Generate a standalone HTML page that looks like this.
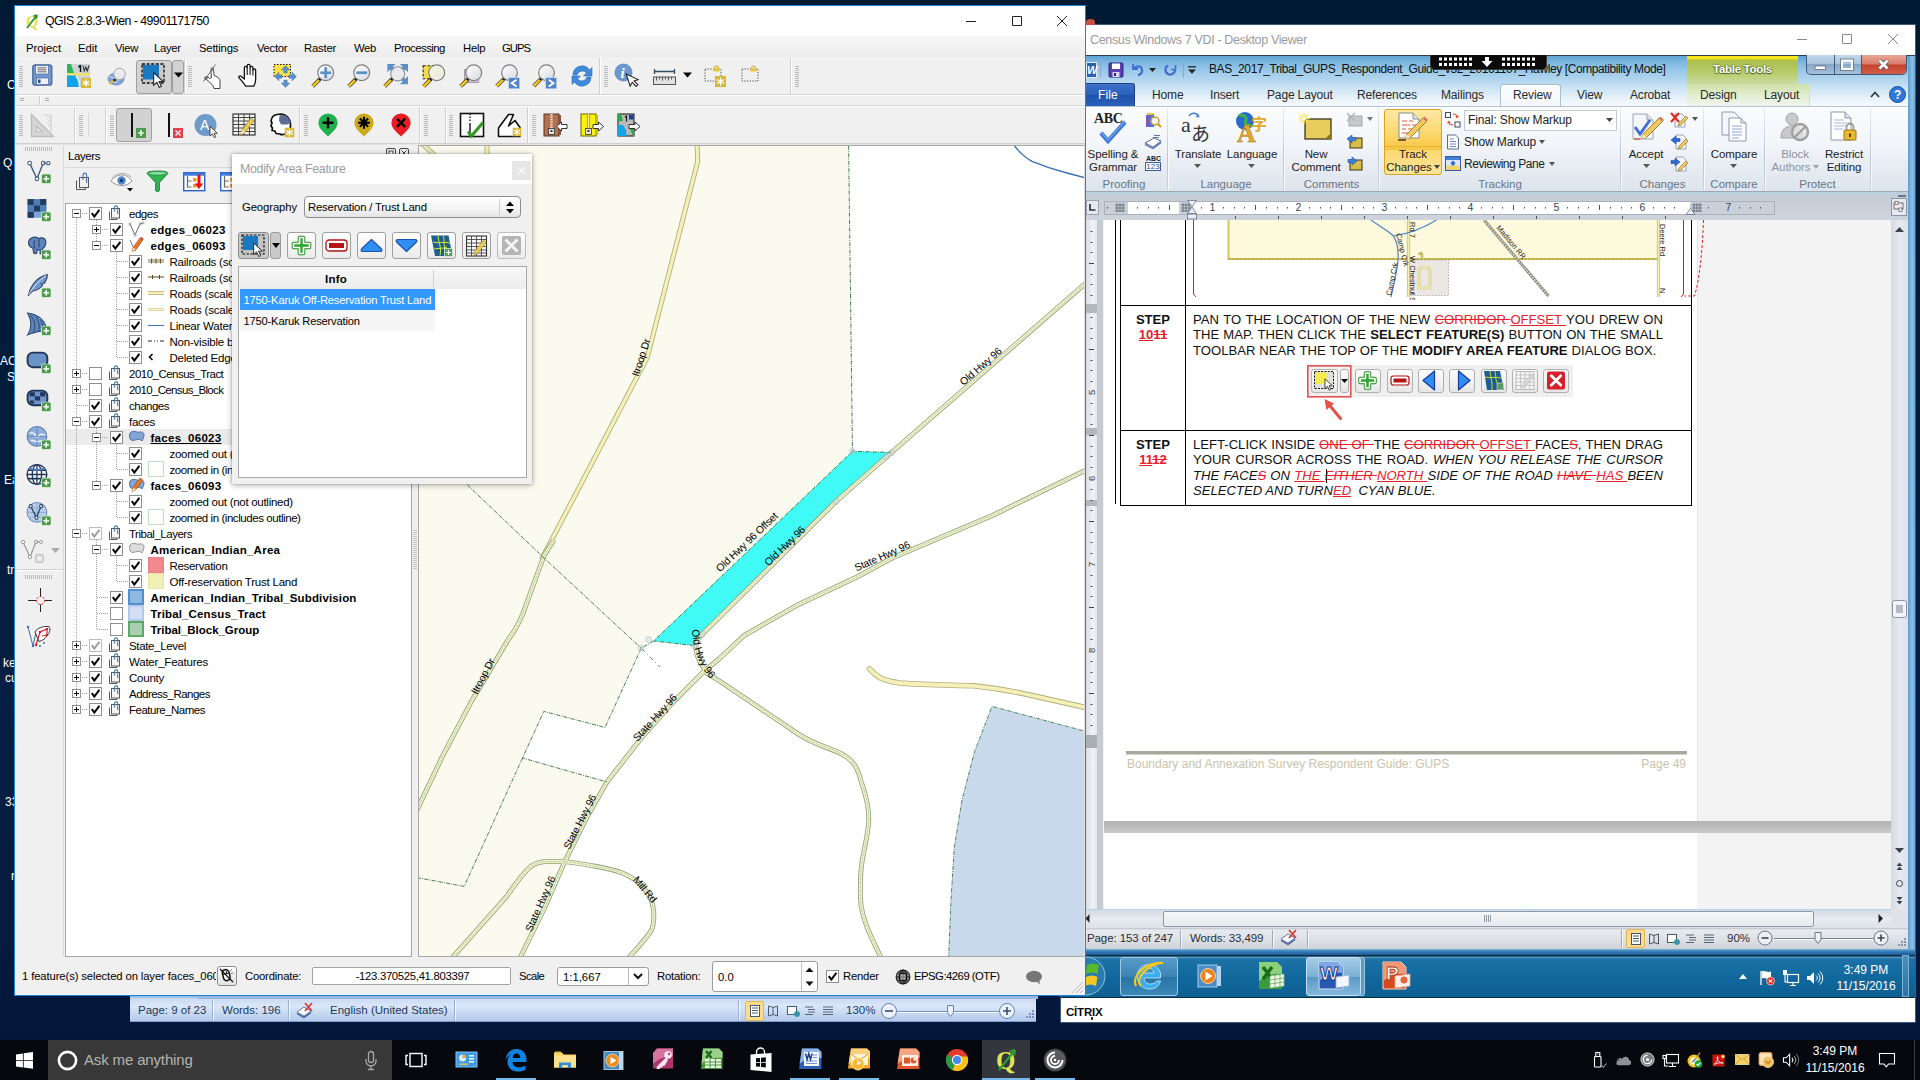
<!DOCTYPE html>
<html lang="en"><head><meta charset="utf-8"><title>Desktop</title>
<style>
*{box-sizing:border-box;margin:0;padding:0}
html,body{width:1920px;height:1080px;overflow:hidden;background:#001a33}
body{position:relative;font-family:"Liberation Sans",sans-serif;font-size:11px;color:#000}
.a{position:absolute}
.t{position:absolute;white-space:nowrap;line-height:1}
svg{position:absolute;overflow:visible}
/* qgis */
#qgis{position:absolute;left:14px;top:5px;width:1072px;height:991px;background:#f0f0f0;border:1px solid #1a84d8}
.q{font-family:"Liberation Sans",sans-serif;font-size:11.5px;color:#000}
.hdl{position:absolute;width:4px;background:repeating-linear-gradient(180deg,#b9b9b9 0,#b9b9b9 1px,transparent 1px,transparent 2px)}
.sep{position:absolute;width:1px;background:#d0d0d0;box-shadow:1px 0 0 #fff}
.cb{position:absolute;width:13px;height:13px;border:1px solid #8f8f8f;background:#fff}
.cb.g{border-color:#bcbcbc}
.row{position:absolute;height:16px;line-height:16px;white-space:nowrap;font-size:11.5px}
.b{font-weight:bold}
.ss{top:930px;width:1px;height:18px;background:#a4aab4;box-shadow:1px 0 0 #f4f6f8}
.dl{font-size:13.100px;line-height:15.500px;color:#111}
.j{width:470px;text-align:justify;text-align-last:justify;white-space:normal}
.de{color:#e8202c;text-decoration:line-through}
.in{color:#e8202c;text-decoration:underline}
.mb{top:369px;width:26px;height:24px;border:1px solid #b0b0b0;border-radius:3px;background:linear-gradient(180deg,#fdfdfd,#e6e6e6)}
.gs{top:108px;width:1px;height:82px;background:linear-gradient(180deg,#e8edf3,#b9c4d2 60%,#c9d2de);box-shadow:1px 0 0 #f8fafc}
.wt{top:89px;font-size:12px;color:#2a2a2a;letter-spacing:-.15px}
.wl{font-size:11.500px;color:#222;letter-spacing:-.1px;text-align:center}
.wg{top:179px;font-size:11.500px;color:#6a7486;letter-spacing:0;text-align:center}
.db{top:78px;width:29px;height:27px;border:1px solid #9f9f9f;border-radius:3px;background:linear-gradient(180deg,#fefefe,#ebebeb)}
</style></head><body>
<!-- desktop -->
<div class="a" id="desk" style="left:0;top:0;width:1920px;height:1040px;background:linear-gradient(180deg,#001a33 0,#011b38 300px,#061f44 700px,#051c40 900px,#03173a 1040px)"></div>
<div class="t" style="left:7px;top:79px;color:#fff;font-size:12px">C</div>
<div class="t" style="left:3px;top:157px;color:#fff;font-size:12px">Q</div>
<div class="t" style="left:0;top:355px;color:#fff;font-size:12px">AC</div>
<div class="t" style="left:7px;top:371px;color:#fff;font-size:12px">S</div>
<div class="t" style="left:4px;top:474px;color:#fff;font-size:12px">Ea</div>
<div class="t" style="left:7px;top:564px;color:#fff;font-size:12px">tr</div>
<div class="t" style="left:3px;top:657px;color:#fff;font-size:12px">ke</div>
<div class="t" style="left:5px;top:672px;color:#fff;font-size:12px">cu</div>
<div class="t" style="left:5px;top:796px;color:#fff;font-size:12px">33</div>
<div class="t" style="left:11px;top:870px;color:#fff;font-size:12px">r</div>
<!-- word window behind qgis (status bar visible) -->
<div class="a" style="left:130px;top:996px;width:906px;height:26px;background:linear-gradient(180deg,#8fb0dc 0,#c9dbf3 3px,#dbe7f8 10px,#c4d7f1 18px,#b5cbeb 25px);border-bottom:1px solid #7f9cc8"></div>
<div class="a" style="left:198px;top:996px;width:840px;height:3px;background:#9db7df"></div>
<div class="t" style="left:138px;top:1005px;font-size:11.5px;color:#1e395b">Page: 9 of 23</div>
<div class="a" style="left:212px;top:1000px;width:1px;height:21px;background:#9db4d6;box-shadow:1px 0 0 #eef4fc"></div>
<div class="t" style="left:222px;top:1005px;font-size:11.5px;color:#1e395b">Words: 196</div>
<div class="a" style="left:288px;top:1000px;width:1px;height:21px;background:#9db4d6;box-shadow:1px 0 0 #eef4fc"></div>
<svg style="left:296px;top:1002px" width="20" height="16" viewBox="0 0 20 16"><path d="M1 10 L8 5 L15 9 L8 14 Z" fill="#fff" stroke="#5a79b5" stroke-width="1"/><path d="M1 11.5 L8 15.5 L15 10.5" fill="none" stroke="#3c5a9a" stroke-width="1.4"/><path d="M9 1 L16 9 M16 1 L9 9" stroke="#e03c28" stroke-width="1.8"/></svg>
<div class="t" style="left:330px;top:1005px;font-size:11.5px;color:#1e395b">English (United States)</div>
<div class="a" style="left:454px;top:1000px;width:1px;height:21px;background:#9db4d6;box-shadow:1px 0 0 #eef4fc"></div>
<div class="a" style="left:738px;top:1000px;width:1px;height:21px;background:#9db4d6;box-shadow:1px 0 0 #eef4fc"></div>
<div class="a" style="left:745px;top:1001px;width:19px;height:20px;background:#fbdc8d;border:1px solid #e5b751;border-radius:2px"></div>
<svg style="left:745px;top:1001px" width="100" height="20" viewBox="0 0 100 20" fill="none" stroke="#4b5a72" stroke-width="1"><rect x="5.5" y="4.5" width="9" height="11" fill="#fff"/><path d="M7 7h6M7 9.5h6M7 12h6"/><path d="M23.500 5v10l4.500 -1.500l4.500 1.500v-10l-4.500 1.500zM28 6.500v7"/><rect x="42.500" y="5.500" width="9" height="8" fill="#fff"/><circle cx="52" cy="13" r="2.500" fill="#3b8bd4" stroke="#2a6"/><path d="M60 6h8M63 8.500h7M63 11h7M60 13.500h8M78 6h10M78 8.500h10M78 11h10M78 13.500h10" stroke="#5a6478"/></svg>
<div class="t" style="left:846px;top:1005px;font-size:11.5px;color:#1e395b">130%</div>
<svg style="left:880px;top:1002px" width="140" height="18" viewBox="0 0 140 18"><path d="M16 9.500h112" stroke="#7b93b8" stroke-width="1"/><path d="M16 10.500h112" stroke="#f4f8fd" stroke-width="1"/><circle cx="9" cy="9" r="7.500" fill="#e9f0fa" stroke="#6b82a8"/><path d="M5 9h8" stroke="#3c4f70" stroke-width="1.600"/><circle cx="127" cy="9" r="7.500" fill="#e9f0fa" stroke="#6b82a8"/><path d="M123 9h8M127 5v8" stroke="#3c4f70" stroke-width="1.600"/><path d="M67.500 3.500h6v7l-3 4l-3 -4z" fill="#e9f0fa" stroke="#6b82a8"/></svg>
<svg style="left:1024px;top:1008px" width="12" height="12" viewBox="0 0 12 12" fill="#7a92b8"><rect x="8" y="2" width="2" height="2"/><rect x="5" y="5" width="2" height="2"/><rect x="8" y="5" width="2" height="2"/><rect x="2" y="8" width="2" height="2"/><rect x="5" y="8" width="2" height="2"/><rect x="8" y="8" width="2" height="2"/></svg>
<!-- Citrix Desktop Viewer window -->
<div class="a" id="ctx" style="left:1060px;top:24px;width:856px;height:999px;background:#fff;border:1px solid #3c5a80"></div>
<div class="t" style="left:1090px;top:34px;font-size:12.500px;color:#9a9a9a;letter-spacing:-.35px">Census Windows 7 VDI - Desktop Viewer</div>
<svg style="left:1796px;top:33px" width="104" height="12" viewBox="0 0 104 12" fill="none" stroke="#8a8a8a" stroke-width="1"><path d="M1 6.500h10M46.500 1.500h9v9h-9zM92 1l10 10M102 1L92 11"/></svg>
<div class="t" style="left:1066px;top:1006.500px;font-size:11.500px;font-weight:bold;letter-spacing:-.2px;color:#0a0a0a">CİTRIX</div><div class="a" style="left:1090.500px;top:1017px;width:2.500px;height:2.500px;border-radius:50%;background:#0a0a0a"></div>
<div class="a" style="left:1086px;top:19px;width:9px;height:6px;border-radius:50% 50% 0 0;background:#c8503c"></div>
<!-- Word 2010 window -->
<div class="a" style="left:1061px;top:55px;width:854px;height:898px;background:#b4d4ec"></div>
<div class="a" style="left:1061px;top:55px;width:854px;height:1px;background:#2d3f58"></div>
<div class="a" style="left:1061px;top:56px;width:847px;height:28px;background:linear-gradient(180deg,#5fa4d4 0,#7ab6e0 20%,#9ccaea 55%,#bcdcf0 100%)"></div>
<div class="a" style="left:1908px;top:56px;width:7px;height:897px;background:linear-gradient(90deg,#5f9bd0,#8cc0e6 60%,#6aa6d8)"></div>
<!-- QAT -->
<div class="a" style="left:1086px;top:62px;width:11px;height:16px;background:#2b5fb4;border:1px solid #dfeaf8;color:#fff;font-weight:bold;font-size:11px;line-height:14px;text-align:center;font-style:italic">W</div>
<div class="a" style="left:1100px;top:63px;width:1px;height:15px;background:#8aa8cc"></div>
<svg style="left:1108px;top:62px" width="16" height="16" viewBox="0 0 16 16"><rect x="1" y="1" width="14" height="14" rx="1" fill="#5a3fb0" stroke="#2e2080"/><rect x="4" y="1.500" width="8" height="5.500" fill="#fff"/><rect x="4.500" y="10" width="7" height="5" fill="#d8d8f0"/><rect x="6" y="11" width="2" height="3" fill="#2e2080"/></svg>
<svg style="left:1130px;top:63px" width="16" height="14" viewBox="0 0 16 14" fill="none"><path d="M3 1v5h5" stroke="#3f6fd0" stroke-width="1.800"/><path d="M3.500 6C6 2.500 11 2.500 12 6.500c.6 3-1.500 5-4 6" stroke="#3f6fd0" stroke-width="2.200"/></svg>
<svg style="left:1149px;top:68px" width="7" height="4" viewBox="0 0 7 4"><path d="M0 0h7L3.500 4z" fill="#222"/></svg>
<svg style="left:1163px;top:62px" width="16" height="16" viewBox="0 0 16 16" fill="none"><path d="M12.500 3v4.500H8" stroke="#3f6fd0" stroke-width="1.600"/><path d="M12 8A4.800 4.800 0 1 1 5 3.500" stroke="#3f6fd0" stroke-width="2.300"/></svg>
<div class="a" style="left:1183px;top:63px;width:1px;height:15px;background:#8aa8cc"></div>
<svg style="left:1188px;top:66px" width="8" height="8" viewBox="0 0 8 8"><path d="M0 .8h8" stroke="#222" stroke-width="1.300"/><path d="M0 3.500h8L4 7.800z" fill="#222"/></svg>
<div class="t" style="left:1209px;top:63px;font-size:12px;letter-spacing:-.4px;color:#111">BAS_2017_Tribal_GUPS_Respondent_Guide_v32_20161107_Hawley [Compatibility Mode]</div>
<!-- citrix pill -->
<div class="a" style="left:1430px;top:55px;width:117px;height:15px;background:#0b0b0b;border-radius:0 0 5px 5px;border:1px solid #3a3a3a;border-top:none"></div>
<svg style="left:1438px;top:56px" width="100" height="12" viewBox="0 0 100 12" fill="#fff"><g id="dg"><rect x="1" y="1.500" width="3" height="3"/><rect x="6" y="1.500" width="3" height="3"/><rect x="11" y="1.500" width="3" height="3"/><rect x="16" y="1.500" width="3" height="3"/><rect x="21" y="1.500" width="3" height="3"/><rect x="26" y="1.500" width="3" height="3"/><rect x="31" y="1.500" width="3" height="3"/><rect x="1" y="7" width="3" height="3"/><rect x="6" y="7" width="3" height="3"/><rect x="11" y="7" width="3" height="3"/><rect x="16" y="7" width="3" height="3"/><rect x="21" y="7" width="3" height="3"/><rect x="26" y="7" width="3" height="3"/><rect x="31" y="7" width="3" height="3"/></g><use href="#dg" x="63"/><path d="M47 1h4v4h3.500L49 11 43.500 5H47z"/></svg>
<!-- table tools -->
<div class="a" style="left:1687px;top:56px;width:111px;height:28px;background:linear-gradient(180deg,#f6e614 0,#f2e21c 3px,#a9c04c 4px,#b8cc6c 60%,#c8dca0 100%)"></div>
<div class="t" style="left:1687px;top:64px;width:111px;text-align:center;font-size:11.500px;font-weight:bold;color:#fff;letter-spacing:-.3px;text-shadow:0 0 2px #4a6018,0 0 1px #4a6018,0 1px 1px #4a6018">Table Tools</div>
<!-- win7 caption buttons -->
<div class="a" style="left:1806px;top:55px;width:101px;height:20px;border:1px solid #40587a;border-top:none;border-radius:0 0 5px 5px;background:linear-gradient(180deg,#c4d8ea 0,#a9c4dc 45%,#86a8c8 50%,#a4c0da 100%);overflow:hidden"><div class="a" style="left:27px;top:0;width:1px;height:20px;background:#40587a"></div><div class="a" style="left:54px;top:0;width:1px;height:20px;background:#40587a"></div><div class="a" style="left:55px;top:0;width:46px;height:20px;background:linear-gradient(180deg,#e8a898 0,#d87c68 45%,#c4432c 50%,#d4604c 100%)"></div></div>
<svg style="left:1806px;top:55px" width="101" height="20" viewBox="0 0 101 20"><rect x="9" y="11" width="10.500" height="3.500" fill="#fff" stroke="#555" stroke-width=".7"/><rect x="36" y="5.500" width="10" height="8.500" fill="none" stroke="#fff" stroke-width="2.200"/><rect x="34.500" y="4" width="13" height="11.500" fill="none" stroke="#555" stroke-width=".6"/><path d="M73.500 5.500l8 8M81.500 5.500l-8 8" stroke="#555" stroke-width="4.200"/><path d="M73.500 5.500l8 8M81.500 5.500l-8 8" stroke="#fff" stroke-width="2.800"/></svg>
<!-- tabs row -->
<div class="a" style="left:1086px;top:84px;width:601px;height:22px;background:linear-gradient(180deg,#c0def2,#e4f0f9 60%,#f6fafd)"></div>
<div class="a" style="left:1798px;top:84px;width:110px;height:22px;background:linear-gradient(180deg,#c0def2,#e4f0f9 60%,#f6fafd)"></div>
<div class="a" style="left:1687px;top:84px;width:123px;height:22px;background:linear-gradient(180deg,#cfe0a4,#e4eed4 55%,#f0f5ec);border-right:1px solid #d8e4b0"></div>
<div class="a" style="left:1061px;top:83px;width:74px;height:23px;border-radius:3px 3px 0 0;background:linear-gradient(180deg,#3b73c8 0,#2a5eb8 50%,#1f52aa 51%,#2a62bc 100%);border:1px solid #1a428c;border-bottom:none"></div>
<div class="t" style="left:1098px;top:89px;font-size:12px;color:#fff;letter-spacing:.1px">File</div>
<div class="a" style="left:1500px;top:84px;width:61px;height:23px;background:linear-gradient(180deg,#fbfdff,#f3f6fa);border:1px solid #a9bcd0;border-bottom:none;border-radius:3px 3px 0 0"></div>
<div class="t wt" style="left:1152px">Home</div><div class="t wt" style="left:1210px">Insert</div><div class="t wt" style="left:1267px">Page Layout</div><div class="t wt" style="left:1357px">References</div><div class="t wt" style="left:1441px">Mailings</div><div class="t wt" style="left:1513px">Review</div><div class="t wt" style="left:1577px">View</div><div class="t wt" style="left:1630px">Acrobat</div><div class="t wt" style="left:1700px">Design</div><div class="t wt" style="left:1764px">Layout</div>
<svg style="left:1870px;top:91px" width="10" height="7" viewBox="0 0 10 7"><path d="M1 6l4-4.500L9 6" fill="none" stroke="#333" stroke-width="1.600"/></svg>
<svg style="left:1889px;top:86px" width="17" height="17" viewBox="0 0 17 17"><circle cx="8.500" cy="8.500" r="8" fill="#2f78d8" stroke="#1c52a8"/><text x="5" y="13" font-family="Liberation Sans,sans-serif" font-weight="bold" font-size="12" fill="#fff">?</text></svg>
<!-- ribbon -->
<div class="a" style="left:1086px;top:106px;width:822px;height:86px;background:linear-gradient(180deg,#fbfcfe 0,#f2f5f9 45%,#e6ebf2 75%,#dde4ed 100%);border-top:1px solid #b4c4d6;border-bottom:1px solid #9aa8b8"></div>
<div class="a gs" style="left:1167px"></div><div class="a gs" style="left:1283px"></div><div class="a gs" style="left:1378px"></div><div class="a gs" style="left:1620px"></div><div class="a gs" style="left:1703px"></div><div class="a gs" style="left:1764px"></div><div class="a gs" style="left:1870px"></div>
<div class="t wg" style="left:1086px;width:76px">Proofing</div><div class="t wg" style="left:1168px;width:116px">Language</div><div class="t wg" style="left:1284px;width:95px">Comments</div><div class="t wg" style="left:1379px;width:242px">Tracking</div><div class="t wg" style="left:1621px;width:83px">Changes</div><div class="t wg" style="left:1704px;width:60px">Compare</div><div class="t wg" style="left:1765px;width:105px">Protect</div>
<!-- spelling -->
<div class="t" style="left:1094px;top:112px;font-family:'Liberation Serif',serif;font-weight:bold;font-size:14px;color:#222;letter-spacing:-.3px">ABC</div>
<svg style="left:1098px;top:120px" width="30" height="24" viewBox="0 0 30 24"><path d="M3 13l7 8L27 2" fill="none" stroke="#3b78d8" stroke-width="4.200" stroke-linejoin="miter"/><path d="M3 12l7 8L27 1" fill="none" stroke="#6da4f0" stroke-width="1.200"/></svg>
<div class="t wl" style="left:1076px;top:149px;width:74px">Spelling &amp;</div><div class="t wl" style="left:1076px;top:162px;width:74px">Grammar</div>
<svg style="left:1144px;top:112px" width="18" height="18" viewBox="0 0 18 18"><rect x="2" y="3" width="4" height="12" fill="#7a5ac0"/><rect x="6" y="2" width="4" height="13" fill="#3f7fd8"/><rect x="3" y="1" width="6" height="2" fill="#e8c040"/><circle cx="11" cy="9" r="4" fill="#eef4fb" stroke="#d09a20" stroke-width="1.400"/><path d="M14 12l3 3" stroke="#d09a20" stroke-width="2"/></svg>
<svg style="left:1144px;top:134px" width="18" height="16" viewBox="0 0 18 16"><path d="M1 9l8 4 8-6-7-3z" fill="#fff" stroke="#4a68a8" stroke-width="1"/><path d="M1 10.500l8 4 8-6" fill="none" stroke="#4a68a8" stroke-width="1.200"/><path d="M10 1.500h6M9 3.500h6" stroke="#4a68a8" stroke-width=".9"/></svg>
<div class="t" style="left:1146px;top:155px;font-size:7px;font-weight:bold;color:#222">ABC</div>
<div class="a" style="left:1145px;top:162px;width:16px;height:9px;border:1px solid #3a5a9a;background:#fff;font-size:8px;line-height:7px;color:#2a4a9a;text-align:center">123</div>
<!-- translate -->
<div class="t" style="left:1181px;top:114px;font-family:'Liberation Serif',serif;font-size:22px;color:#333">a</div>
<div class="t" style="left:1191px;top:123px;font-family:'Noto Sans CJK JP','Liberation Sans',sans-serif;font-size:19px;color:#333">あ</div>
<svg style="left:1188px;top:111px" width="12" height="8" viewBox="0 0 12 8"><path d="M1 5c2-3 6-4 9-1" fill="none" stroke="#3f7fd8" stroke-width="1.400"/><path d="M11.500 6.500l-4-.5 3-3z" fill="#3f7fd8"/></svg>
<div class="t wl" style="left:1170px;top:149px;width:56px">Translate</div>
<svg style="left:1194px;top:164px" width="7" height="4" viewBox="0 0 7 4"><path d="M0 0h7L3.500 4z" fill="#555"/></svg>
<!-- language -->
<svg style="left:1234px;top:110px" width="36" height="34" viewBox="0 0 36 34"><circle cx="11" cy="11" r="9" fill="#2a6ad0"/><path d="M5 6c3-2 6 0 7 2s-2 4 0 6 5 0 6 3" fill="none" stroke="#3fb04a" stroke-width="3"/><text x="3" y="32" font-family="Liberation Serif,serif" font-weight="bold" font-size="26" fill="#e0a830" stroke="#b07c14" stroke-width=".5">A</text><text x="17" y="20" font-family="Noto Sans CJK SC,sans-serif" font-weight="bold" font-size="16" fill="#e0a830">字</text></svg>
<div class="t wl" style="left:1222px;top:149px;width:60px">Language</div>
<svg style="left:1248px;top:164px" width="7" height="4" viewBox="0 0 7 4"><path d="M0 0h7L3.500 4z" fill="#555"/></svg>
<!-- new comment -->
<svg style="left:1298px;top:112px" width="36" height="30" viewBox="0 0 36 30"><rect x="7" y="7" width="26" height="20" fill="#e8cc5c" stroke="#3a3420" stroke-width="1.300"/><path d="M27 27l6-6v6z" fill="#8a7420"/><path d="M6 1v11M.500 6.500h11M2 2.500l8 8M10 2.500l-8 8" stroke="#fbe45c" stroke-width="1.300"/><circle cx="6" cy="6.500" r="1.800" fill="#fff"/></svg>
<div class="t wl" style="left:1286px;top:149px;width:60px">New</div><div class="t wl" style="left:1286px;top:162px;width:60px">Comment</div>
<svg style="left:1346px;top:112px" width="28" height="16" viewBox="0 0 28 16"><rect x="3" y="4" width="13" height="10" fill="#c8c8c8" stroke="#a8a8a8"/><path d="M1 1l8 8M9 1L1 9" stroke="#b4b4b4" stroke-width="1.500"/><path d="M21 5h6l-3 4z" fill="#777"/></svg>
<svg style="left:1346px;top:134px" width="18" height="16" viewBox="0 0 18 16"><rect x="4" y="4" width="12" height="10" fill="#d8bc48" stroke="#3a3420"/><path d="M1 5l5-4v2.500h4v3H6V9z" fill="#3f7fd8" stroke="#1c52a8" stroke-width=".6"/></svg>
<svg style="left:1346px;top:156px" width="18" height="16" viewBox="0 0 18 16"><rect x="4" y="4" width="12" height="10" fill="#d8bc48" stroke="#3a3420"/><path d="M11 5L6 1v2.500H2v3h4V9z" fill="#3f7fd8" stroke="#1c52a8" stroke-width=".6"/></svg>
<!-- track changes (active) -->
<div class="a" style="left:1384px;top:109px;width:58px;height:66px;border:1px solid #d9a520;border-radius:3px;background:linear-gradient(180deg,#fde9a4 0,#fbd668 40%,#f9c440 62%,#fbd870 63%,#fde49a 100%)"></div>
<div class="a" style="left:1385px;top:146px;width:56px;height:1px;background:#e4b53c"></div>
<svg style="left:1396px;top:112px" width="34" height="32" viewBox="0 0 34 32"><path d="M3 1h14l6 6v19H3z" fill="#fff" stroke="#8a8a8a"/><path d="M17 1v6h6" fill="#e4e4e4" stroke="#8a8a8a"/><path d="M6 9h5M13 9h4M6 13h8M16 13h4M6 17h4M12 17h6M6 21h6" stroke="#e05c30" stroke-width="1.200"/><path d="M2 28h8" stroke="#222" stroke-width="1.300"/><path d="M9 27l2-5L27 6l3.500 3.500-16 16z" fill="#f0c860" stroke="#8a6a20" stroke-width=".8"/><path d="M9 27l2-5 3.500 3.500z" fill="#f4e4c4"/><path d="M27 6l3.500 3.500 1.500-1.500-3.500-3.500z" fill="#e07070"/></svg>
<div class="t wl" style="left:1384px;top:149px;width:58px">Track</div><div class="t wl" style="left:1380px;top:162px;width:58px">Changes</div>
<svg style="left:1434px;top:165px" width="6" height="4" viewBox="0 0 6 4"><path d="M0 0h6L3 4z" fill="#444"/></svg>
<!-- tracking -->
<svg style="left:1445px;top:112px" width="16" height="16" viewBox="0 0 16 16" fill="none"><rect x=".5" y=".5" width="5" height="5" stroke="#446" fill="#fff"/><rect x="10" y="10" width="5" height="5" stroke="#446" fill="#fff"/><path d="M8 2c3 0 4 1 4 3M11 4l1 1.500L13.500 4M8 13c-3 0-4-1-4-3M5 11L4 9.500 2.500 11" stroke="#d8502c" stroke-width="1.200"/></svg>
<div class="a" style="left:1464px;top:110px;width:153px;height:21px;background:#fff;border:1px solid #c2cad4"></div>
<div class="t" style="left:1468px;top:114px;font-size:12px;color:#222;letter-spacing:-.12px">Final: Show Markup</div>
<svg style="left:1606px;top:118px" width="7" height="4" viewBox="0 0 7 4"><path d="M0 0h7L3.500 4z" fill="#444"/></svg>
<svg style="left:1446px;top:134px" width="14" height="16" viewBox="0 0 14 16"><path d="M1.500 1h8l3 3v11h-11z" fill="#fff" stroke="#5a6a8a"/><path d="M4 5h4M4 7.500h6M4 10h6M4 12.500h6" stroke="#5a78b8" stroke-width=".9"/></svg>
<div class="t" style="left:1464px;top:136px;font-size:12px;color:#222;letter-spacing:-.12px">Show Markup</div>
<svg style="left:1539px;top:140px" width="6" height="4" viewBox="0 0 6 4"><path d="M0 0h6L3 4z" fill="#555"/></svg>
<svg style="left:1445px;top:156px" width="16" height="15" viewBox="0 0 16 15"><rect x=".5" y=".5" width="15" height="14" fill="#dce8f8" stroke="#3a5a9a"/><rect x="1" y="1" width="14" height="3" fill="#3f7fd8"/><rect x="1.500" y="9.500" width="13" height="4.500" fill="#f0d468"/><path d="M8 4.500l3 3H9.500v2h-3v-2H5z" fill="#2f68c8"/></svg>
<div class="t" style="left:1464px;top:158px;font-size:12px;color:#222;letter-spacing:-.45px">Reviewing Pane</div>
<svg style="left:1549px;top:162px" width="6" height="4" viewBox="0 0 6 4"><path d="M0 0h6L3 4z" fill="#555"/></svg>
<!-- accept -->
<svg style="left:1631px;top:112px" width="34" height="32" viewBox="0 0 34 32"><path d="M2 2h14l6 6v19H2z" fill="#f4f6fa" stroke="#9aa4b4"/><path d="M16 2v6h6" fill="#dde2ea" stroke="#9aa4b4"/><path d="M4 15l5 7L19 8" fill="none" stroke="#3f6fd8" stroke-width="3"/><path d="M3 27h6" stroke="#d04030" stroke-width="1.200"/><path d="M10 27l2-5L28 6l3.500 3.500-16 16z" fill="#f0c860" stroke="#8a6a20" stroke-width=".8"/><path d="M10 27l2-5 3.500 3.500z" fill="#f4e4c4"/><path d="M28 6l3.500 3.500 1.500-1.500-3.500-3.500z" fill="#e07070"/></svg>
<div class="t wl" style="left:1621px;top:149px;width:50px">Accept</div>
<svg style="left:1643px;top:164px" width="7" height="4" viewBox="0 0 7 4"><path d="M0 0h7L3.500 4z" fill="#555"/></svg>
<svg style="left:1670px;top:112px" width="30" height="16" viewBox="0 0 30 16"><path d="M5 2h7l3 3v10H5z" fill="#f4f6fa" stroke="#9aa4b4"/><path d="M1 1l8 9M9 1l-8 9" stroke="#e02818" stroke-width="2"/><path d="M8 14l1-3 7-7 2 2-7 7z" fill="#f0c860" stroke="#8a6a20" stroke-width=".6"/><path d="M22 5h6l-3 4z" fill="#555"/></svg>
<svg style="left:1670px;top:134px" width="18" height="16" viewBox="0 0 18 16"><path d="M6 1h7l3 3v11H6z" fill="#f4f6fa" stroke="#9aa4b4"/><path d="M1 6l5-4v2.500h4v3H6V10z" fill="#2f68d8" stroke="#1c52a8" stroke-width=".6"/><path d="M8 15l1-3 7-7 2 2-7 7z" fill="#f0c860" stroke="#8a6a20" stroke-width=".6"/></svg>
<svg style="left:1670px;top:156px" width="18" height="16" viewBox="0 0 18 16"><path d="M6 1h7l3 3v11H6z" fill="#f4f6fa" stroke="#9aa4b4"/><path d="M10 6L5 2v2.500H1v3h4V10z" fill="#2f68d8" stroke="#1c52a8" stroke-width=".6"/><path d="M8 15l1-3 7-7 2 2-7 7z" fill="#f0c860" stroke="#8a6a20" stroke-width=".6"/></svg>
<!-- compare -->
<svg style="left:1720px;top:111px" width="30" height="32" viewBox="0 0 30 32"><path d="M2 1h12l5 5v18H2z" fill="#f4f6fa" stroke="#8a98ac"/><path d="M9 7h12l5 5v18H9z" fill="#fff" stroke="#8a98ac"/><path d="M21 7v5h5" fill="#dde2ea" stroke="#8a98ac"/><path d="M12 15h10M12 18h10M12 21h10M12 24h10M12 27h7" stroke="#7a9ad0" stroke-width=".9"/></svg>
<div class="t wl" style="left:1706px;top:149px;width:56px">Compare</div>
<svg style="left:1730px;top:164px" width="7" height="4" viewBox="0 0 7 4"><path d="M0 0h7L3.500 4z" fill="#555"/></svg>
<!-- block authors (disabled) -->
<svg style="left:1779px;top:111px" width="32" height="32" viewBox="0 0 32 32"><circle cx="13" cy="8" r="6" fill="#c9c9c9" stroke="#a4a4a4"/><path d="M2 27c0-9 5-12 11-12s11 3 11 12z" fill="#c9c9c9" stroke="#a4a4a4"/><circle cx="21" cy="21" r="8" fill="#e2e2e2" fill-opacity=".8" stroke="#a0a0a0" stroke-width="2.400"/><path d="M15.500 26.500l11-11" stroke="#a0a0a0" stroke-width="2.400"/></svg>
<div class="t wl" style="left:1767px;top:149px;width:56px;color:#8e949e">Block</div><div class="t wl" style="left:1763px;top:162px;width:56px;color:#8e949e">Authors</div>
<svg style="left:1813px;top:165px" width="6" height="4" viewBox="0 0 6 4"><path d="M0 0h6L3 4z" fill="#a0a0a0"/></svg>
<!-- restrict editing -->
<svg style="left:1828px;top:111px" width="32" height="32" viewBox="0 0 32 32"><path d="M3 1h14l6 6v22H3z" fill="#fff" stroke="#8a98ac"/><path d="M17 1v6h6" fill="#dde2ea" stroke="#8a98ac"/><path d="M6 9h10M6 12h13M6 15h13M6 18h9" stroke="#9ab0d4" stroke-width=".9"/><rect x="16" y="19" width="12" height="10" rx="1" fill="#e8b830" stroke="#9a7410"/><path d="M18.500 19v-3a3.500 3.500 0 0 1 7 0v3" fill="none" stroke="#9a9a9a" stroke-width="1.800"/><rect x="21" y="22.500" width="2" height="3.500" fill="#5a4408"/></svg>
<div class="t wl" style="left:1816px;top:149px;width:56px">Restrict</div><div class="t wl" style="left:1816px;top:162px;width:56px">Editing</div>
<!-- ruler row -->
<div class="a" style="left:1086px;top:193px;width:822px;height:27px;background:linear-gradient(180deg,#c4ccd6 0,#cdd4dd 100%)"></div>
<div class="a" style="left:1086px;top:200px;width:13px;height:15px;background:#e6eaf0;border:1px solid #9aa4b2"></div>
<svg style="left:1089px;top:204px" width="7" height="7" viewBox="0 0 7 7"><path d="M1 0v6H6.500" fill="none" stroke="#333" stroke-width="1.700"/></svg>
<div class="a" style="left:1104px;top:201px;width:671px;height:14px;background:#c9d0da;border:1px solid #aab2be"></div>
<div class="a" style="left:1128px;top:202px;width:51px;height:12px;background:#fff"></div>
<div class="a" style="left:1192px;top:202px;width:498px;height:12px;background:#fff"></div>
<svg style="left:1104px;top:199px" width="680" height="22" viewBox="1104 199 680 22" font-family="Liberation Sans,sans-serif" font-size="10.500" fill="#3a4456">
<g stroke="#4a5466" stroke-width="1" fill="none"><path d="M1117 203v9M1120 203v9M1123 203v9M1115 205h10M1115 208h10M1115 211h10" stroke-width=".7"/><path d="M1183 203v9M1186 203v9M1189 203v9M1181 205h10M1181 208h10M1181 211h10" stroke-width=".7"/><path d="M1694 203v9M1697 203v9M1700 203v9M1692 205h10M1692 208h10M1692 211h10" stroke-width=".7"/></g>
<path d="M1187.500 200.500h9l-4.500 6.500zM1187.500 213.500h9l-4.500 -6.500z" fill="#e9edf3" stroke="#6a7486" stroke-width=".8"/><rect x="1187.500" y="214" width="9" height="5" fill="#e9edf3" stroke="#6a7486" stroke-width=".8"/>
<path d="M1686 214.500l4.500 -6 4.500 6z" fill="#e9edf3" stroke="#6a7486" stroke-width=".8"/>
<text x="1209.500" y="211">1</text><text x="1295.500" y="211">2</text><text x="1381.500" y="211">3</text><text x="1467.500" y="211">4</text><text x="1553.500" y="211">5</text><text x="1639.500" y="211">6</text><text x="1725.500" y="211">7</text>
<g fill="#4a5466">
<rect x="1137" y="207" width="1" height="1.500"/><rect x="1148" y="207" width="1" height="1.500"/><rect x="1158" y="207" width="1" height="1.500"/><rect x="1169" y="205" width="1" height="5"/><rect x="1107" y="207" width="1" height="1.500"/>
<rect x="1201" y="207" width="1" height="1.500"/><rect x="1223" y="207" width="1" height="1.500"/><rect x="1234" y="207" width="1" height="1.500"/><rect x="1244" y="207" width="1" height="1.500"/><rect x="1255" y="205" width="1" height="5"/><rect x="1266" y="207" width="1" height="1.500"/><rect x="1277" y="207" width="1" height="1.500"/><rect x="1287" y="207" width="1" height="1.500"/>
<rect x="1309" y="207" width="1" height="1.500"/><rect x="1320" y="207" width="1" height="1.500"/><rect x="1330" y="207" width="1" height="1.500"/><rect x="1341" y="205" width="1" height="5"/><rect x="1352" y="207" width="1" height="1.500"/><rect x="1363" y="207" width="1" height="1.500"/><rect x="1373" y="207" width="1" height="1.500"/>
<rect x="1395" y="207" width="1" height="1.500"/><rect x="1406" y="207" width="1" height="1.500"/><rect x="1416" y="207" width="1" height="1.500"/><rect x="1427" y="205" width="1" height="5"/><rect x="1438" y="207" width="1" height="1.500"/><rect x="1449" y="207" width="1" height="1.500"/><rect x="1459" y="207" width="1" height="1.500"/>
<rect x="1481" y="207" width="1" height="1.500"/><rect x="1492" y="207" width="1" height="1.500"/><rect x="1502" y="207" width="1" height="1.500"/><rect x="1513" y="205" width="1" height="5"/><rect x="1524" y="207" width="1" height="1.500"/><rect x="1535" y="207" width="1" height="1.500"/><rect x="1545" y="207" width="1" height="1.500"/>
<rect x="1567" y="207" width="1" height="1.500"/><rect x="1578" y="207" width="1" height="1.500"/><rect x="1588" y="207" width="1" height="1.500"/><rect x="1599" y="205" width="1" height="5"/><rect x="1610" y="207" width="1" height="1.500"/><rect x="1621" y="207" width="1" height="1.500"/><rect x="1631" y="207" width="1" height="1.500"/>
<rect x="1653" y="207" width="1" height="1.500"/><rect x="1664" y="207" width="1" height="1.500"/><rect x="1674" y="207" width="1" height="1.500"/><rect x="1708" y="207" width="1" height="1.500"/><rect x="1739" y="207" width="1" height="1.500"/><rect x="1750" y="207" width="1" height="1.500"/><rect x="1760" y="207" width="1" height="1.500"/>
<rect x="1235" y="216" width="1" height="3"/><rect x="1278" y="216" width="1" height="3"/><rect x="1321" y="216" width="1" height="3"/><rect x="1364" y="216" width="1" height="3"/><rect x="1407" y="216" width="1" height="3"/><rect x="1450" y="216" width="1" height="3"/><rect x="1493" y="216" width="1" height="3"/><rect x="1536" y="216" width="1" height="3"/><rect x="1579" y="216" width="1" height="3"/><rect x="1622" y="216" width="1" height="3"/><rect x="1665" y="216" width="1" height="3"/>
</g></svg>
<div class="a" style="left:1891px;top:198px;width:16px;height:18px;background:#e6eaf0;border:1px solid #8a94a2"></div>
<svg style="left:1893px;top:201px" width="12" height="12" viewBox="0 0 12 12"><rect x="1" y="2" width="9" height="6" fill="#f4e4ee" stroke="#555" stroke-width=".8"/><rect x="2" y=".5" width="3" height="3" fill="#fff" stroke="#555" stroke-width=".7"/><rect x="6" y="7" width="3" height="3.500" fill="#fff" stroke="#555" stroke-width=".7"/></svg>
<div class="a" style="left:1898px;top:195px;width:8px;height:2px;background:#6a7486"></div>
<!-- doc area -->
<div class="a" style="left:1086px;top:220px;width:805px;height:689px;background:#f3f3f3"></div>
<div class="a" style="left:1104px;top:220px;width:593px;height:601px;background:#fff"></div>
<div class="a" style="left:1104px;top:821px;width:787px;height:12px;background:linear-gradient(180deg,#b2b2b2,#c9c9c9)"></div>
<div class="a" style="left:1104px;top:833px;width:593px;height:76px;background:#fff"></div>
<div class="a" style="left:1697px;top:220px;width:1px;height:601px;background:#e4e4e4"></div>
<!-- vertical ruler -->
<div class="a" style="left:1086px;top:220px;width:17px;height:689px;background:#c6cad1"></div>
<div class="a" style="left:1086px;top:220px;width:11px;height:689px;background:linear-gradient(90deg,#d9dce1,#f2f3f5 60%,#e4e6ea)"></div>
<div class="a" style="left:1086px;top:304px;width:11px;height:9px;background:#b4b8be"></div>
<div class="a" style="left:1086px;top:428px;width:11px;height:7px;background:#b4b8be"></div>
<div class="a" style="left:1086px;top:500px;width:11px;height:6px;background:#b4b8be"></div>
<div class="a" style="left:1086px;top:735px;width:11px;height:13px;background:#a9adb4"></div>
<svg style="left:1086px;top:220px" width="12" height="600" viewBox="1086 220 12 600" fill="#3a4250" font-family="Liberation Sans,sans-serif" font-size="9.500">
<text transform="translate(1095 395) rotate(-90)">5</text><rect x="1090.500" y="403" width="2" height="1"/><rect x="1090.500" y="414" width="2" height="1"/><rect x="1090.500" y="424" width="2" height="1"/><rect x="1089" y="435" width="5" height="1"/><rect x="1090.500" y="446" width="2" height="1"/><rect x="1090.500" y="456" width="2" height="1"/><rect x="1090.500" y="467" width="2" height="1"/><text transform="translate(1095 481) rotate(-90)">6</text><rect x="1090.500" y="489" width="2" height="1"/><rect x="1090.500" y="500" width="2" height="1"/><rect x="1090.500" y="510" width="2" height="1"/><rect x="1089" y="521" width="5" height="1"/><rect x="1090.500" y="532" width="2" height="1"/><rect x="1090.500" y="542" width="2" height="1"/><rect x="1090.500" y="553" width="2" height="1"/><text transform="translate(1095 567) rotate(-90)">7</text><rect x="1090.500" y="575" width="2" height="1"/><rect x="1090.500" y="586" width="2" height="1"/><rect x="1090.500" y="596" width="2" height="1"/><rect x="1089" y="607" width="5" height="1"/><rect x="1090.500" y="618" width="2" height="1"/><rect x="1090.500" y="628" width="2" height="1"/><rect x="1090.500" y="639" width="2" height="1"/><text transform="translate(1095 653) rotate(-90)">8</text><rect x="1090.500" y="661" width="2" height="1"/><rect x="1090.500" y="672" width="2" height="1"/><rect x="1090.500" y="682" width="2" height="1"/><rect x="1089" y="693" width="5" height="1"/><rect x="1090.500" y="704" width="2" height="1"/><rect x="1090.500" y="714" width="2" height="1"/><rect x="1090.500" y="725" width="2" height="1"/><rect x="1090.500" y="381" width="2" height="1"/><rect x="1090.500" y="370" width="2" height="1"/><rect x="1090.500" y="360" width="2" height="1"/><rect x="1089" y="349" width="5" height="1"/><rect x="1090.500" y="338" width="2" height="1"/><rect x="1090.500" y="328" width="2" height="1"/><rect x="1090.500" y="317" width="2" height="1"/><rect x="1090.500" y="295" width="2" height="1"/><rect x="1090.500" y="284" width="2" height="1"/><rect x="1090.500" y="274" width="2" height="1"/><rect x="1089" y="263" width="5" height="1"/><rect x="1090.500" y="252" width="2" height="1"/><rect x="1090.500" y="242" width="2" height="1"/><rect x="1090.500" y="231" width="2" height="1"/></svg>
<!-- table borders -->
<div class="a" style="left:1115px;top:220px;width:1px;height:284px;background:#000"></div>
<div class="a" style="left:1120px;top:220px;width:572px;height:286px;border:1px solid #000;border-top:none"></div>
<div class="a" style="left:1185px;top:220px;width:1px;height:285px;background:#000"></div>
<div class="a" style="left:1120px;top:305px;width:572px;height:1px;background:#000"></div>
<div class="a" style="left:1120px;top:430px;width:572px;height:1px;background:#000"></div>
<!-- embedded map picture -->
<svg style="left:1190px;top:220px;overflow:hidden" width="520" height="80" viewBox="1190 220 520 80" font-family="Liberation Sans,sans-serif" font-size="7.500" fill="#222">
<rect x="1228.500" y="216" width="430" height="43" fill="#fcf9dc" stroke="#d4c45c" stroke-width="2"/>
<path d="M1228.500 259h430" stroke="#8a7a20" stroke-width=".8" stroke-dasharray="2 2"/>
<rect x="1409" y="260" width="39.500" height="35.500" fill="#ebe7e3" stroke="#999" stroke-width=".7" stroke-dasharray="1.500 1.500"/>
<path d="M1419 255c1-3 3-3 3 0v4M1419 288v-17c0-3 2-4 5-4h1c3 0 5 1 5 4v17z" fill="none" stroke="#c8c070" stroke-width="2.600"/><path d="M1419 288v-17c0-3 2-4 5-4h1c3 0 5 1 5 4v17z" fill="none" stroke="#f6f2b8" stroke-width="1.300"/>
<path d="M1408.500 220v77M1658.500 220v77" stroke="#bcb670" stroke-width="3.200"/><path d="M1408.500 220v77M1658.500 220v77" stroke="#f3f0b4" stroke-width="1.800"/>
<path d="M1484 220l64.500 76" stroke="#8a8a80" stroke-width="3"/><path d="M1484 220l64.500 76" stroke="#e4e0d0" stroke-width="1.600" stroke-dasharray="1.500 1.500"/>
<path d="M1371 220c8 6 16 10 22.500 16c5 8 5 16 4.500 24c-1 12-4 24-7 37M1393.500 236c14-2 30-8 43-16" fill="none" stroke="#4a84c4" stroke-width="1.200"/>
<text transform="translate(1396 234) rotate(76)">Camp Crk</text><text transform="translate(1391 296) rotate(-78)">Camp Crk</text><text transform="translate(1410 256) rotate(90)">W Chestnut St</text><text transform="translate(1410 222) rotate(90)">Rd 7</text><text transform="translate(1496 228) rotate(50)">Madison RR</text><text transform="translate(1660 224) rotate(90)">Deere Rd</text><text transform="translate(1660 288) rotate(90)">N</text>
<path d="M1193.500 220v74l2.500 3M1683.500 220v74l-2.500 3" fill="none" stroke="#c8202c" stroke-width="1"/>
<path d="M1703.500 220c-1 30-4 60-9 76h-10" fill="none" stroke="#d8202c" stroke-width="1" stroke-dasharray="3 2"/>
</svg>
<!-- doc text -->
<div class="t dl b" style="left:1121px;top:312px;width:64px;text-align:center">STEP</div>
<div class="t dl" style="left:1121px;top:327px;width:64px;text-align:center;font-weight:bold"><span class="in">10</span><span class="de">11</span></div>
<div class="t dl j" style="left:1193px;top:311.700px">PAN TO THE LOCATION OF THE NEW <span class="de">CORRIDOR </span><span class="in">OFFSET </span>YOU DREW ON</div>
<div class="t dl j" style="left:1193px;top:327px">THE MAP. THEN CLICK THE <b>SELECT FEATURE(S)</b> BUTTON ON THE SMALL</div>
<div class="t dl" style="left:1193px;top:342.500px;word-spacing:.35px">TOOLBAR NEAR THE TOP OF THE <b>MODIFY AREA FEATURE</b> DIALOG BOX.</div>
<div class="t dl b" style="left:1121px;top:436.500px;width:64px;text-align:center">STEP</div>
<div class="t dl b" style="left:1121px;top:452px;width:64px;text-align:center"><span class="in">11</span><span class="de">12</span></div>
<div class="t dl j" style="left:1193px;top:436.500px">LEFT-CLICK INSIDE <span class="de">ONE OF </span>THE <span class="de">CORRIDOR </span><span class="in">OFFSET </span>FACE<span class="de">S</span>, THEN DRAG</div>
<div class="t dl j" style="left:1193px;top:452px">YOUR CURSOR ACROSS THE ROAD. <i>WHEN YOU RELEASE THE CURSOR</i></div>
<div class="t dl j" style="left:1193px;top:468px;font-style:italic">THE FACE<span class="de">S</span> ON <span class="in">THE </span><span class="de">EITHER </span><span class="in">NORTH </span>SIDE OF THE ROAD <span class="de">HAVE </span><span class="in">HAS </span>BEEN</div>
<div class="t dl" style="left:1193px;top:483px;font-style:italic">SELECTED AND TURN<span class="in">ED</span>&nbsp; CYAN BLUE.</div>
<div class="a" style="left:1326px;top:469px;width:1px;height:14px;background:#111"></div>
<!-- mini toolbar picture -->
<div class="a" style="left:1307px;top:365px;width:266px;height:32px;background:#efefef"></div>
<div class="a mb" style="left:1311px;width:27px"></div><div class="a mb" style="left:1340px;width:9px"></div><div class="a mb" style="left:1355px"></div><div class="a mb" style="left:1387px"></div><div class="a mb" style="left:1418px"></div><div class="a mb" style="left:1449px"></div><div class="a mb" style="left:1481px"></div><div class="a mb" style="left:1512px"></div><div class="a mb" style="left:1543px"></div>
<svg style="left:1307px;top:365px" width="266" height="60" viewBox="1307 365 266 60">
<rect x="1314.500" y="371.500" width="19" height="17" fill="#e0e0e0" stroke="#111" stroke-width="1" stroke-dasharray="2 1.300"/><rect x="1315.500" y="372.500" width="12" height="11.500" fill="#f4ec50"/><use href="#cur" x="1324" y="378" width="10" height="13"/>
<path d="M1341 379h7l-3.500 4z" fill="#000"/>
<path d="M1365.500 373h4v5.500h5.500v4h-5.500v5.500h-4v-5.500h-5.500v-4h5.500z" fill="#2ba52b" stroke="#1d8a1d" stroke-width="3.400" stroke-linejoin="round"/><path d="M1365.500 373h4v5.500h5.500v4h-5.500v5.500h-4v-5.500h-5.500v-4h5.500z" fill="#2ba52b" stroke="#fff" stroke-width="1.600" stroke-linejoin="round"/>
<rect x="1391" y="376" width="18" height="9" rx="2.500" fill="#fff" stroke="#b01414" stroke-width="1.200"/><rect x="1393.500" y="378.500" width="13" height="4" fill="#b41414"/>
<path d="M1423 380.500l11.500-9.500v19z" fill="#2f8ff0" stroke="#1438a0" stroke-width="1.200" stroke-linejoin="round"/>
<path d="M1470 380.500l-11.500-9.500v19z" fill="#2f8ff0" stroke="#1438a0" stroke-width="1.200" stroke-linejoin="round"/>
<path d="M1484 371h16l4 19h-17z" fill="#1e5f92"/><path d="M1485 377c5 2 11-1 16 1M1490 371c0 6 3 11 2 19M1495 371c1 5 0 9 3 13" fill="none" stroke="#d6ea2a" stroke-width=".9"/><rect x="1497" y="383" width="6.500" height="6.500" fill="#5a9a5a" stroke="#d8ead8" stroke-width=".6"/>
<rect x="1516" y="371.500" width="18" height="18" fill="#f4f4f4" stroke="#b4b4b4" stroke-width=".9"/><path d="M1516 375h18M1516 378.500h18M1516 382h18M1516 385.500h18M1520.500 371.500v18M1525 371.500v18M1529.500 371.500v18" stroke="#bcbcbc" stroke-width=".8"/><path d="M1522 388l1.500-4 8-10 2 2-8 10z" fill="#dcdcdc" stroke="#b0b0b0" stroke-width=".6"/>
<rect x="1547" y="371.500" width="18" height="18" rx="2" fill="#d8202c"/><path d="M1550.500 375l11 11M1561.500 375l-11 11" stroke="#fff" stroke-width="2.800"/>
<rect x="1307.800" y="365.800" width="43" height="31" fill="none" stroke="#e4504c" stroke-width="1.600"/>
<path d="M1340.500 418.500L1328.500 404" stroke="#e4504c" stroke-width="3" stroke-linecap="round"/><path d="M1324.500 399l2 11 7.500-6.500z" fill="#e4504c"/>
</svg>
<!-- footer -->
<div class="a" style="left:1126px;top:751px;width:561px;height:3px;background:#a9a89c"></div>
<div class="a" style="left:1126px;top:754px;width:561px;height:1px;background:#d4d3c8"></div>
<div class="t" style="left:1127px;top:758px;font-size:12px;color:#c8c4ac">Boundary and Annexation Survey Respondent Guide: GUPS</div>
<div class="t" style="left:1586px;top:758px;width:100px;text-align:right;font-size:12px;color:#c8c4ac">Page 49</div>
<!-- v scrollbar -->
<div class="a" style="left:1891px;top:220px;width:17px;height:689px;background:linear-gradient(90deg,#d4dae2,#e6eaef 50%,#dde2e9)"></div>
<svg style="left:1891px;top:220px" width="17" height="690" viewBox="1891 220 17 690" fill="#3a4250"><path d="M1895 232l4.500-5 4.500 5zM1895 848l4.500 5 4.500-5z"/><path d="M1896.500 866l3-3.500 3 3.500zM1896.500 870l3-3.500 3 3.500z"/><circle cx="1899.500" cy="883.500" r="3" fill="none" stroke="#3a4250" stroke-width="1"/><path d="M1896.500 897l3 3.500 3-3.500zM1896.500 901l3 3.500 3-3.500z"/><rect x="1892.500" y="600.500" width="14" height="17" rx="2" fill="#f2f4f7" stroke="#8a94a4"/><path d="M1896 606h7M1896 608h7M1896 610h7M1896 612h7" stroke="#5a6474" stroke-width=".8"/></svg>
<!-- h scrollbar -->
<div class="a" style="left:1086px;top:910px;width:805px;height:18px;background:linear-gradient(180deg,#d4dae2,#e8ebf0 50%,#dde2e9)"></div>
<div class="a" style="left:1163px;top:911px;width:651px;height:16px;background:linear-gradient(180deg,#f6f7f9,#e6e9ee);border:1px solid #8e98a8;border-radius:2px"></div>
<svg style="left:1086px;top:910px" width="805" height="18" viewBox="1086 910 805 18"><path d="M1089.500 914l-4 4.500 4 4.500z" fill="#222"/><path d="M1878.500 914l4.500 4.500-4.500 4.500z" fill="#222"/><path d="M1484.500 915v7M1486.500 915v7M1488.500 915v7M1490.500 915v7" stroke="#7a8494" stroke-width=".8"/></svg>
<div class="a" style="left:1891px;top:909px;width:17px;height:19px;background:#dfe3e9"></div>
<!-- status bar -->
<div class="a" style="left:1086px;top:928px;width:822px;height:21px;background:linear-gradient(180deg,#bcc2ca 0,#e6e9ed 2px,#dfe2e7 50%,#cfd3d9 100%)"></div>
<div class="t" style="left:1087px;top:933px;font-size:11.500px;color:#2a2e36;letter-spacing:-.1px">Page: 153 of 247</div>
<div class="a ss" style="left:1180px"></div>
<div class="t" style="left:1190px;top:933px;font-size:11.500px;color:#2a2e36;letter-spacing:-.1px">Words: 33,499</div>
<div class="a ss" style="left:1272px"></div><div class="a ss" style="left:1307px"></div><div class="a ss" style="left:1621px"></div>
<svg style="left:1280px;top:929px" width="20" height="16" viewBox="0 0 20 16"><path d="M1 10L8 5l7 4-7 5z" fill="#fff" stroke="#5a79b5" stroke-width="1"/><path d="M1 11.500l7 4 7-5" fill="none" stroke="#3c5a9a" stroke-width="1.400"/><path d="M9 1l7 8M16 1L9 9" stroke="#e03c28" stroke-width="1.800"/></svg>
<div class="a" style="left:1626px;top:929px;width:19px;height:19px;background:#fbdc8d;border:1px solid #e5b751;border-radius:2px"></div>
<svg style="left:1626px;top:929px" width="100" height="20" viewBox="0 0 100 20" fill="none" stroke="#4b5262" stroke-width="1"><rect x="5.500" y="4.500" width="9" height="11" fill="#fff"/><path d="M7 7h6M7 9.500h6M7 12h6"/><path d="M23.500 5v10l4.500-1.500 4.500 1.500V5L28 6.500zM28 6.500v7"/><rect x="41.500" y="5.500" width="9" height="8" fill="#fff"/><circle cx="51" cy="13" r="2.500" fill="#3b8bd4" stroke="#2a6"/><path d="M60 6h8M63 8.500h7M63 11h7M60 13.500h8M78 6h10M78 8.500h10M78 11h10M78 13.500h10" stroke="#5a6478"/></svg>
<div class="t" style="left:1727px;top:933px;font-size:11.500px;color:#2a2e36">90%</div>
<svg style="left:1756px;top:929px" width="140" height="18" viewBox="0 0 140 18"><path d="M18 9.500h100" stroke="#7b8494" stroke-width="1"/><path d="M18 10.500h100" stroke="#f4f6f9" stroke-width="1"/><circle cx="9" cy="9" r="7" fill="#eef0f4" stroke="#6b7484"/><path d="M5.500 9h7" stroke="#3c4454" stroke-width="1.600"/><circle cx="125" cy="9" r="7" fill="#eef0f4" stroke="#6b7484"/><path d="M121.500 9h7M125 5.500v7" stroke="#3c4454" stroke-width="1.600"/><path d="M59 3.500h6v7l-3 4-3-4z" fill="#eef0f4" stroke="#6b7484"/></svg>
<svg style="left:1896px;top:936px" width="12" height="12" viewBox="0 0 12 12" fill="#8a94a4"><rect x="8" y="2" width="2" height="2"/><rect x="5" y="5" width="2" height="2"/><rect x="8" y="5" width="2" height="2"/><rect x="2" y="8" width="2" height="2"/><rect x="5" y="8" width="2" height="2"/><rect x="8" y="8" width="2" height="2"/></svg>
<div class="a" style="left:1061px;top:949px;width:854px;height:6px;background:linear-gradient(180deg,#7fb4dc 0,#3f84bc 2px,#2a6ca8 4px,#1c5a90 100%)"></div>
<!-- win7 taskbar -->
<div class="a" style="left:1061px;top:955px;width:854px;height:43px;background:linear-gradient(180deg,#0a2c44 0,#0a2c44 1px,#5a9cc4 2px,#1c72a6 4px,#10689c 50%,#0e5f92 100%)"></div>
<div class="a" style="left:1061px;top:997px;width:854px;height:1px;background:#0c2c44"></div>
<svg style="left:1066px;top:956px" width="40" height="40" viewBox="0 0 40 40"><circle cx="20" cy="20" r="19" fill="#2a7cb0" stroke="#8cc4e4" stroke-width="1"/><path d="M21 9c4-2 8-2 12 0l-1.500 9c-4-2-8-2-11.500 0z" fill="#5ab82a"/><path d="M20 21c4-2 8-2 11.500 0L30 30c-3.500-2-7.500-2-11 0z" fill="#f4c820"/></svg>
<div class="a" style="left:1120px;top:957px;width:58px;height:39px;border:1px solid #9cc8e4;border-radius:3px;background:linear-gradient(180deg,#5a9cc8 0,#3a84b4 50%,#2a74a4 51%,#3a88b8 100%)"></div>
<svg style="left:1133px;top:960px" width="34" height="32" viewBox="0 0 34 32"><path d="M4 16a12 12 0 0 1 23.500-3V18H11c.5 4 3 6 6.500 6 3 0 5-1 6-3h4c-1.500 5-5 8-10.500 8C9 29 4 23 4 16zm7-3h10c-.5-3-2.500-5-5-5s-4.500 2-5 5z" fill="#3aaef0" stroke="#c8ecfc" stroke-width=".8"/><path d="M3 26C-2 16 12 2 30 3c-10 0-24 10-24 19 0 2 1 3 2 4" fill="none" stroke="#f4c820" stroke-width="2.200"/></svg>
<svg style="left:1196px;top:962px" width="28" height="28" viewBox="0 0 28 28"><rect x="2" y="3" width="19" height="22" fill="#4a8cc8" stroke="#a4ccec"/><rect x="21" y="4" width="4" height="20" fill="#b4d4ee"/><circle cx="12" cy="14" r="7.500" fill="#f0841c" stroke="#fbd4a0"/><path d="M9.500 9.500l7 4.500-7 4.500z" fill="#fff"/></svg>
<svg style="left:1256px;top:960px" width="32" height="32" viewBox="0 0 32 32"><path d="M3 2h18l5 5v22H3z" fill="#3c9a3c"/><path d="M3 2h18l5 5v7C16 13 9 16 3 21z" fill="#8cd07c"/><path d="M7 7l9 12M16 7L7 19" stroke="#1a6b1a" stroke-width="3.400"/><path d="M14 16l14-2v12l-14 2z" fill="#f0f8ec" stroke="#8cba80" stroke-width=".8"/><path d="M14 20l14-2M14 24l14-2M19 15.500v12M24 14.500v12" stroke="#6ca860" stroke-width=".8"/></svg>
<div class="a" style="left:1360px;top:957px;width:5px;height:39px;border:1px solid #9cc8e4;border-left:none;border-radius:0 3px 3px 0;background:#5a9cc8"></div>
<div class="a" style="left:1306px;top:957px;width:55px;height:39px;border:1px solid #c4e0f2;border-radius:3px;background:linear-gradient(180deg,#a4cce6 0,#7cb0d4 50%,#5a98c4 51%,#84b8dc 100%)"></div>
<svg style="left:1316px;top:959px" width="36" height="34" viewBox="0 0 36 34"><path d="M3 3h19l5 5v22H3z" fill="#2858b0" stroke="#d4e4f8" stroke-width="1"/><path d="M3.500 3.500h18.500l4.500 4.500v6C17 13 10 16 3.500 22z" fill="#7ca8e8"/><text x="4" y="21" font-family="Liberation Sans,sans-serif" font-weight="bold" font-size="19" fill="#fff" stroke="#16388a" stroke-width="1">W</text><path d="M20 18l13-2v11l-13 2z" fill="#f4f8fe" stroke="#9ab4dc" stroke-width=".8"/></svg>
<svg style="left:1380px;top:960px" width="34" height="32" viewBox="0 0 34 32"><path d="M3 2h18l5 5v22H3z" fill="#d8481c" stroke="#fbd8c8" stroke-width="1"/><path d="M3.500 2.500h17.500l4.500 4.500v7C16 13 9 16 3.500 21z" fill="#f49878"/><text x="6" y="20" font-family="Liberation Sans,sans-serif" font-weight="bold" font-size="19" fill="#fff" stroke="#a8300c" stroke-width=".8">P</text><path d="M15 16l15-2v12l-15 2z" fill="#fdeee8" stroke="#e8a890" stroke-width=".8"/><circle cx="24" cy="20" r="3.500" fill="#e8643c"/></svg>
<!-- win7 tray -->
<svg style="left:1738px;top:968px" width="90" height="20" viewBox="0 0 90 20"><path d="M1 11l4-5 4 5z" fill="#fff"/><path d="M23 3v14" stroke="#fff" stroke-width="1.300"/><path d="M24 3.500c3-1.500 5 1.500 9 0v7c-4 1.500-6-1.500-9 0z" fill="#fff"/><circle cx="32.500" cy="13" r="4" fill="#e0281c" stroke="#fff" stroke-width=".6"/><path d="M30.800 11.300l3.400 3.400M34.200 11.300l-3.400 3.400" stroke="#fff" stroke-width="1.100"/><rect x="49.500" y="6.500" width="11" height="8" fill="none" stroke="#fff" stroke-width="1.200"/><path d="M52 17.500h6M55 14.500v3" stroke="#fff" stroke-width="1.200"/><rect x="45" y="2" width="4" height="5" fill="#fff"/><path d="M47 7v7h2.500" stroke="#fff" stroke-width="1.100" fill="none"/><path d="M69 8h3l4-4v12l-4-4h-3z" fill="#fff"/><path d="M78 7.500a3 3 0 0 1 0 5M80 5.500a6 6 0 0 1 0 9M82 3.500a9 9 0 0 1 0 13" fill="none" stroke="#fff" stroke-width="1"/></svg>
<div class="t" style="left:1826px;top:964px;width:80px;text-align:center;font-size:12px;color:#fff">3:49 PM</div>
<div class="t" style="left:1826px;top:980px;width:80px;text-align:center;font-size:12px;color:#fff">11/15/2016</div>
<div class="a" style="left:1902px;top:955px;width:7px;height:42px;border:1px solid #7fb0d0;background:linear-gradient(180deg,#4a90bc,#2a74a4)"></div>
<!-- QGIS window -->
<svg width="0" height="0" style="position:absolute"><defs>
<linearGradient id="gl" x1="0" y1="0" x2="1" y2="1"><stop offset="0" stop-color="#fff"/><stop offset="1" stop-color="#d4dbe2"/></linearGradient>
<symbol id="mag" viewBox="0 0 24 24"><path d="M2.500 21.500L9 15" stroke="#4a4a3a" stroke-width="3.600" stroke-linecap="butt"/><path d="M2.500 21.500L8.500 15.500" stroke="#f6c81c" stroke-width="2.200" stroke-linecap="butt"/><circle cx="9.300" cy="14.700" r="1.400" fill="#111"/><circle cx="14.500" cy="9" r="7.300" fill="url(#gl)" stroke="#7d7d7d" stroke-width="1.100"/></symbol>
<symbol id="plusb" viewBox="0 0 12 12"><rect x=".5" y=".5" width="11" height="11" rx="2" fill="#4c9a4c" stroke="#dfeedd" stroke-width="1"/><path d="M6 2.800v6.400M2.800 6h6.400" stroke="#fff" stroke-width="1.800"/></symbol>
<symbol id="star" viewBox="0 0 12 12"><rect width="12" height="12" fill="#d8b832"/><path d="M6 1.500v9M2 3.800l8 4.400M10 3.800l-8 4.400" stroke="#fff" stroke-width="1.500"/></symbol>
<symbol id="cur" viewBox="0 0 12 16"><path d="M1 1L1 13L4 10.200L6.300 15L8.300 14L6 9.500L10 9.500z" fill="#fff" stroke="#222" stroke-width="1"/></symbol>
</defs></svg>
<div id="qgis">
<div class="a" style="left:0;top:0;width:1070px;height:30px;background:#fff"></div>
<!-- app icon -->
<div class="t" style="left:11px;top:8px;font-size:16px;font-weight:bold;font-family:'Liberation Serif',serif;color:#dfe65c">Q</div>
<svg style="left:10px;top:7px" width="15" height="16" viewBox="0 0 15 16"><path d="M2 15L12 2M12 2l-3.500 1M12 2l-.7 3.500" stroke="#2a8f2a" stroke-width="1.700" fill="none"/></svg>
<div class="t" style="left:30px;top:9px;font-size:12.300px;letter-spacing:-.52px;color:#000">QGIS 2.8.3-Wien - 49901171750</div>
<svg style="left:950px;top:9px" width="112" height="12" viewBox="0 0 112 12" fill="none" stroke="#222" stroke-width="1"><path d="M1 6.500h10M47.500 1.500h9v9h-9zM92 1l10 10M102 1L92 11"/></svg>
<!-- menubar -->
<div class="a" style="left:0;top:30px;width:1070px;height:21px;background:linear-gradient(180deg,#f7f7f7,#ececec)"></div>
<div class="t q" style="left:11px;top:37px;font-size:11.300px">Project</div>
<div class="t q" style="left:63px;top:37px;font-size:11.300px">Edit</div>
<div class="t q" style="left:100px;top:37px;font-size:11.300px;letter-spacing:-.3px">View</div>
<div class="t q" style="left:139px;top:37px;font-size:11.300px;letter-spacing:-.3px">Layer</div>
<div class="t q" style="left:184px;top:37px;font-size:11.300px;letter-spacing:-.2px">Settings</div>
<div class="t q" style="left:242px;top:37px;font-size:11.300px;letter-spacing:-.3px">Vector</div>
<div class="t q" style="left:289px;top:37px;font-size:11.300px;letter-spacing:-.2px">Raster</div>
<div class="t q" style="left:339px;top:37px;font-size:11.300px;letter-spacing:-.4px">Web</div>
<div class="t q" style="left:379px;top:37px;font-size:11.300px;letter-spacing:-.5px">Processing</div>
<div class="t q" style="left:448px;top:37px;font-size:11.300px;letter-spacing:-.2px">Help</div>
<div class="t q" style="left:487px;top:37px;font-size:11.300px;letter-spacing:-1px">GUPS</div>
<!-- toolbar row 1 -->
<div class="a" style="left:0;top:88px;width:1070px;height:1px;background:#d6d6d6"></div>
<div class="a" style="left:0;top:89px;width:1070px;height:1px;background:#fff"></div>
<div class="hdl" style="left:4px;top:60px;height:22px"></div>
<div class="hdl" style="left:173px;top:60px;height:22px"></div>
<div class="hdl" style="left:589px;top:60px;height:22px"></div>
<div class="hdl" style="left:780px;top:60px;height:22px"></div>
<div class="sep" style="left:169px;top:52px;height:36px"></div>
<div class="sep" style="left:584px;top:52px;height:36px"></div>
<div class="sep" style="left:775px;top:52px;height:36px"></div>
<!-- save -->
<svg style="left:17px;top:58px" width="21" height="22" viewBox="0 0 21 22"><rect x=".8" y=".8" width="19" height="20.400" rx="2.500" fill="#7398cc" stroke="#4a68a0" stroke-width="1.300"/><rect x="3.500" y="1.500" width="13" height="8.500" fill="#f4f4f4" stroke="#4a68a0" stroke-width=".7"/><path d="M5.500 3.800h9M5.500 5.800h9M5.500 7.800h9" stroke="#444" stroke-width=".8"/><rect x="4.500" y="14" width="12" height="6.500" fill="#eef1f6" stroke="#4a68a0" stroke-width=".7"/><rect x="6" y="15.500" width="2.500" height="3.500" fill="#33507e"/></svg>
<!-- new map -->
<svg style="left:51px;top:57px" width="26" height="26" viewBox="0 0 26 26"><rect x="1" y="1" width="23" height="23" fill="#cfd3d6"/><path d="M1 1h4l3 9H1z" fill="#2fb457"/><path d="M1 10h23v2.500H1z" fill="#ece56a"/><path d="M1 12.500h9l3 6 .5 5.500H1z" fill="#10a5e8"/><path d="M10 12.500l3 6 .5 5.500" fill="none" stroke="#f2f2f2" stroke-width="1.500"/><path d="M14.500 2v7M12.500 4.500l2-2.500" stroke="#111" stroke-width="1.400" fill="none"/><path d="M17 2.500l1.200 5.500 1.600-4 1.400 4L23 2.500" stroke="#333" stroke-width="1.100" fill="none"/><use href="#star" x="15" y="15" width="10" height="10"/></svg>
<!-- globe magnifier -->
<svg style="left:91px;top:60px" width="24" height="24" viewBox="0 0 24 24"><ellipse cx="10" cy="13" rx="8.500" ry="6.500" fill="#7f9fd3"/><path d="M3 11c3-1 4 2 6 1s2 3 5 2M4 16c2-1 5 1 8 0M7 8c2 1 3 0 4 1" stroke="#c9d8f0" stroke-width="1.100" fill="none"/><path d="M4 17.500l4.500-3.500" stroke="#e9b52a" stroke-width="2" stroke-linecap="round"/><circle cx="8.500" cy="14" r="1.300" fill="#222"/><circle cx="13.500" cy="8" r="5.800" fill="#ececee" stroke="#a2a2a2" stroke-width="1" opacity=".95"/></svg>
<!-- select feature button (checked) -->
<div class="a" style="left:121px;top:54px;width:36px;height:34px;background:#d2d2d2;border:1px solid #9f9f9f;border-radius:3px"></div>
<div class="a" style="left:157px;top:54px;width:12px;height:34px;background:#d2d2d2;border:1px solid #9f9f9f;border-radius:3px"></div>
<svg style="left:126px;top:57px" width="28" height="26" viewBox="0 0 28 26"><rect x="1" y="1" width="22" height="19" fill="#c9c9c9" stroke="#111" stroke-width="1.300" stroke-dasharray="3 1.600"/><rect x="2" y="2" width="16" height="14.500" fill="#1878c0"/><use href="#cur" x="11.500" y="8.500" width="13" height="17"/></svg>
<svg style="left:159px;top:66px" width="9" height="6" viewBox="0 0 9 6"><path d="M0 .5h9L4.500 5.500z" fill="#000"/></svg>
<!-- touch -->
<svg style="left:188px;top:58px" width="18" height="25" viewBox="0 0 18 25"><path d="M.5 17.500L12.500 .5" stroke="#555" stroke-width=".8" fill="none"/><path d="M2 14.200L5 13l1.500 1.500L8.400 13.800 8 6.500C8 4.800 10.300 4.800 10.500 6.500L11.200 11.500 14.500 13 17 15.800V24.500H11L10 21.800 6.500 18z" fill="#fff" stroke="#333" stroke-width=".9" stroke-linejoin="round"/><circle cx="3" cy="14" r="1.500" fill="none" stroke="#555" stroke-width=".7"/><circle cx="9.300" cy="5" r="1.500" fill="none" stroke="#555" stroke-width=".7"/></svg>
<!-- hand -->
<svg style="left:222px;top:57px" width="26" height="27" viewBox="0 0 24 28" preserveAspectRatio="none"><path d="M8 24c-1.500-3-4-6-6-8.500-1-1.500.5-2.800 2-1.500l2.800 2.800V5c0-2 2.600-2 2.600 0V3c0-2 2.700-2 2.700 0v2c0-1.900 2.600-1.900 2.600 0v2.500c0-1.800 2.500-1.800 2.500 0V17c0 3-.7 5-1.700 7z" fill="#fff" stroke="#111" stroke-width="1.200" stroke-linejoin="round"/><path d="M9.400 5v7.500M12.100 5v7.500M14.700 7v6" stroke="#111" stroke-width="1" fill="none"/></svg>
<!-- pan to selection -->
<svg style="left:258px;top:56px" width="26" height="27" viewBox="0 0 26 27"><rect x="1" y="2.500" width="16.500" height="12" fill="#fbe348" stroke="#111" stroke-width="1" stroke-dasharray="1.500 1.500"/><g fill="#5b8fc8" stroke="#4a7ab4" stroke-width=".4"><path d="M12.500 3.500l4.500 4.500h-2.800v3h-3.400v-3H8z"/><path d="M12.500 25.500l4.500-4.500h-2.800v-3h-3.400v3H8z"/><path d="M1.500 14.500l4.500-4.500v2.800h3v3.400h-3V19z"/><path d="M23.500 14.500l-4.500-4.500v2.800h-3v3.400h3V19z"/></g></svg>
<!-- zoom in -->
<svg style="left:295px;top:57px" width="26" height="26" viewBox="0 0 24 24"><use href="#mag" width="24" height="24"/><path d="M14.500 4v10M9.500 9h10" stroke="#5b8fc8" stroke-width="2.500"/></svg>
<svg style="left:331px;top:57px" width="26" height="26" viewBox="0 0 24 24"><use href="#mag" width="24" height="24"/><path d="M9.500 9h10" stroke="#5b8fc8" stroke-width="2.500"/></svg>
<!-- zoom full -->
<svg style="left:367px;top:57px" width="26" height="26" viewBox="0 0 24 24"><g fill="#5b8fc8"><path d="M5 1h7.500l-2.500 2.500 3 3-2.500 2.500-3-3L5 8.500z"/><path d="M24 1v7.500L21.500 6l-3 3L16 6.500l3-3L16.500 1z"/><path d="M24 19.500V12l-2.500 2.500-3-3L16 14l3 3-2.500 2.500z"/></g><path d="M2.500 21.500L9 15" stroke="#4a4a3a" stroke-width="3.600"/><path d="M2.500 21.500L8.500 15.500" stroke="#f6c81c" stroke-width="2.200"/><circle cx="9.300" cy="14.700" r="1.400" fill="#111"/><circle cx="14.500" cy="10" r="6.500" fill="#e9ebed" stroke="#8a8a8a" stroke-width="1" opacity=".93"/></svg>
<!-- zoom selection -->
<svg style="left:406px;top:57px" width="26" height="26" viewBox="0 0 24 24"><rect x="2" y="2.500" width="11" height="12" fill="#f0dd4a" stroke="#222" stroke-width="1" stroke-dasharray="2.500 1.500"/><use href="#mag" width="24" height="24"/><circle cx="14.500" cy="9" r="6.500" fill="#f2efd8" opacity=".75"/></svg>
<!-- zoom layer -->
<svg style="left:443px;top:57px" width="26" height="26" viewBox="0 0 24 24"><path d="M6 6h13v12H6z" fill="#d2cad6" stroke="#9a8fa0" stroke-width=".8"/><use href="#mag" width="24" height="24"/></svg>
<!-- zoom last / next -->
<svg style="left:480px;top:57px" width="28" height="28" viewBox="0 0 26 26"><use href="#mag" width="24" height="24" x="-1" y="0"/><rect x="12.500" y="13.500" width="10.500" height="10.500" fill="#4f84c8" stroke="#dfe8f4" stroke-width=".6"/><path d="M20 15.500l-4.500 3.200 4.500 3.200" stroke="#fff" stroke-width="1.800" fill="none"/></svg>
<svg style="left:517px;top:57px" width="28" height="28" viewBox="0 0 26 26"><use href="#mag" width="24" height="24" x="-1" y="0"/><rect x="12.500" y="13.500" width="10.500" height="10.500" fill="#4f84c8" stroke="#dfe8f4" stroke-width=".6"/><path d="M15.500 15.500l4.500 3.200-4.500 3.200" stroke="#fff" stroke-width="1.800" fill="none"/></svg>
<!-- refresh -->
<svg style="left:555px;top:58px" width="24" height="24" viewBox="0 0 24 24"><path d="M3 11A9 9 0 0 1 19.500 6L22 3.500V12h-8.500l3-3A5.500 5.500 0 0 0 7 11z" fill="#3f8ad8" stroke="#2a6cb8" stroke-width=".6"/><path d="M21 13A9 9 0 0 1 4.500 18L2 20.500V12h8.500l-3 3A5.500 5.500 0 0 0 17 13z" fill="#3f8ad8" stroke="#2a6cb8" stroke-width=".6"/></svg>
<!-- identify -->
<svg style="left:599px;top:57px" width="28" height="28" viewBox="0 0 28 28"><circle cx="9.500" cy="9.500" r="8.500" fill="#6c98d0" stroke="#5680bc" stroke-width=".8"/><text x="6.500" y="15" font-family="Liberation Serif,serif" font-style="italic" font-weight="bold" font-size="15" fill="#fff">i</text><use href="#cur" x="11" y="10" width="13" height="17" transform="rotate(-18 12 11)"/></svg>
<!-- measure -->
<svg style="left:637px;top:62px" width="26" height="20" viewBox="0 0 26 20"><path d="M2.500 1v5M22.500 1v5M2.500 3.500h20" stroke="#2c4a66" stroke-width="1.300" fill="none"/><rect x="1.500" y="9" width="22" height="7.500" fill="#e2e2e2" stroke="#555" stroke-width="1"/><path d="M4.500 9v3.500M7.500 9v2.500M10.500 9v3.500M13.500 9v2.500M16.500 9v3.500M19.500 9v2.500" stroke="#444" stroke-width=".9"/></svg>
<svg style="left:668px;top:66px" width="9" height="6" viewBox="0 0 9 6"><path d="M0 .5h9L4.500 5.500z" fill="#000"/></svg>
<!-- select new / deselect -->
<svg style="left:688px;top:58px" width="26" height="26" viewBox="0 0 26 26"><rect x="2" y="5" width="16" height="12" fill="none" stroke="#444" stroke-width="1" stroke-dasharray="1.200 1.500"/><path d="M11.500 4.500V3.500a1.300 1.300 0 0 1 1.300-1.300h1.400a1.300 1.300 0 0 1 1.300 1.300v1" fill="none" stroke="#c9a21c" stroke-width="1"/><rect x="10.500" y="4" width="6" height="3.500" fill="#e8c73c"/><use href="#star" x="12" y="12" width="11" height="11"/></svg>
<svg style="left:725px;top:58px" width="26" height="26" viewBox="0 0 26 26"><rect x="2" y="5" width="16" height="12" fill="none" stroke="#444" stroke-width="1" stroke-dasharray="1.200 1.500"/><path d="M11.500 4.500V3.500a1.300 1.300 0 0 1 1.300-1.300h1.400a1.300 1.300 0 0 1 1.300 1.300v1" fill="none" stroke="#c9a21c" stroke-width="1"/><rect x="10.500" y="4" width="6" height="3.500" fill="#e8c73c"/></svg>
<!-- small row -->
<div class="a" style="left:0;top:99px;width:1070px;height:1px;background:#d6d6d6"></div>
<div class="a" style="left:0;top:100px;width:1070px;height:1px;background:#fff"></div>
<div class="a" style="left:5px;top:92px;width:4px;height:3px;border-top:1px solid #b0b0b0;border-bottom:1px solid #b0b0b0"></div>
<div class="a" style="left:30px;top:92px;width:4px;height:3px;border-top:1px solid #b0b0b0;border-bottom:1px solid #b0b0b0"></div>
<div class="sep" style="left:24px;top:90px;height:9px"></div>
<!-- toolbar row 2 (coords relative to #qgis content: x-15,y-6) -->
<div class="a" style="left:0;top:137px;width:1070px;height:1px;background:#d0d0d0"></div>
<div class="a" style="left:0;top:138px;width:1070px;height:1px;background:#e4e4e4"></div>
<div class="hdl" style="left:4px;top:109px;height:22px"></div>
<div class="hdl" style="left:64px;top:109px;height:22px"></div>
<div class="a" style="left:73px;top:107px;width:1px;height:24px;background:#dadada"></div>
<div class="hdl" style="left:95px;top:109px;height:22px"></div>
<div class="hdl" style="left:289px;top:109px;height:22px"></div>
<div class="hdl" style="left:409px;top:109px;height:22px"></div>
<div class="hdl" style="left:434px;top:109px;height:22px"></div>
<div class="hdl" style="left:517px;top:109px;height:22px"></div>
<div class="sep" style="left:59px;top:101px;height:36px"></div>
<div class="sep" style="left:90px;top:101px;height:36px"></div>
<div class="sep" style="left:284px;top:101px;height:36px"></div>
<div class="sep" style="left:404px;top:101px;height:36px"></div>
<div class="sep" style="left:430px;top:101px;height:36px"></div>
<div class="sep" style="left:512px;top:101px;height:36px"></div>
<!-- set square (disabled) -->
<svg style="left:15px;top:107px" width="25" height="25" viewBox="0 0 25 25"><path d="M1.500 1.500L23.500 23.500H1.500z" fill="#d6d6d6" stroke="#bdbdbd" stroke-width="1.400"/><path d="M6.500 13v6h6z" fill="#f0f0f0" stroke="#bdbdbd" stroke-width="1.200"/><path d="M14 2h7v17" fill="none" stroke="#cdcdcd" stroke-width="1.200"/><path d="M17 5h3M18 7.500h2M17 10h3M18 12.500h2" stroke="#cfcfcf" stroke-width=".8"/></svg>
<!-- add line (checked) -->
<div class="a" style="left:101px;top:102px;width:36px;height:34px;background:#d2d2d2;border:1px solid #a2a2a2;border-radius:3px"></div>
<div class="a" style="left:116px;top:107px;width:2px;height:24px;background:#111"></div>
<svg style="left:121px;top:122px" width="10" height="10" viewBox="0 0 10 10"><rect width="10" height="10" fill="#4f9a4f"/><path d="M5 2v6M2 5h6" stroke="#e4f2e4" stroke-width="1.700"/></svg>
<div class="a" style="left:153px;top:107px;width:2px;height:24px;background:#111"></div>
<svg style="left:158px;top:122px" width="10" height="10" viewBox="0 0 10 10"><rect width="10" height="10" fill="#e0424c"/><path d="M2.500 2.500l5 5M7.500 2.500l-5 5" stroke="#fbe4e6" stroke-width="1.500"/></svg>
<!-- A label -->
<svg style="left:179px;top:107px" width="28" height="26" viewBox="0 0 28 26"><circle cx="11.500" cy="12" r="11" fill="#6f9bcb"/><text x="6" y="17" font-family="Liberation Sans,sans-serif" font-size="14" fill="#fff">A</text><use href="#cur" x="15" y="12.500" width="10" height="13"/></svg>
<!-- attribute table -->
<svg style="left:217px;top:107px" width="26" height="25" viewBox="0 0 26 25"><rect x="1" y="1" width="22" height="21" fill="#f4f4f4" stroke="#333" stroke-width="1.200"/><path d="M1 4.500h22M1 8h22M1 11.500h22M1 15h22M1 18.500h22M6.500 1v21M12 1v21M17.500 1v21" stroke="#444" stroke-width="1"/><path d="M8.500 21.500l1.500-4.500L19 5l3 2.500-9 12z" fill="#e6cc58" stroke="#a8922e" stroke-width=".8"/><path d="M8.500 21.500l1.500-4.500 3 2.500z" fill="#f4e9c0"/></svg>
<!-- head -->
<svg style="left:254px;top:106px" width="27" height="27" viewBox="0 0 27 27"><path d="M8 2.500c-3 .5-5.500 3-6 6.500l1 2-1 3 1.500 2-.5 2.500 3 .5 1 2.500 4 .5c1 .8 3 .8 5 0 3-1.500 6-5 5.500-10C21 6 17 2 12 2z" fill="#fff" stroke="#111" stroke-width="1.700" stroke-linejoin="round"/><path d="M10.500 3.500c4-1.500 9.500 0 11 7.500l-3 1.500h-6.500l-2-4z" fill="#5c6e96"/><use href="#star" x="15.500" y="15.500" width="10" height="10"/></svg>
<!-- pins -->
<svg style="left:302px;top:107px" width="22" height="24" viewBox="0 0 24 26"><path d="M12 25.500C8 21 1.500 17 1.500 10.500a10.500 10 0 0 1 21 0C22.500 17 16 21 12 25.500z" fill="#1fb24a"/><path d="M12 4.500v12M6 10.500h12" stroke="#000" stroke-width="2.600"/></svg>
<svg style="left:338px;top:107px" width="22" height="24" viewBox="0 0 24 26"><path d="M12 25.500C8 21 1.500 17 1.500 10.500a10.500 10 0 0 1 21 0C22.500 17 16 21 12 25.500z" fill="#cda91f"/><path d="M12 4v13M5.500 10.500h13M7.500 6l9 9M16.500 6l-9 9" stroke="#000" stroke-width="2.300"/></svg>
<svg style="left:375px;top:107px" width="22" height="24" viewBox="0 0 24 26"><path d="M12 25.500C8 21 1.500 17 1.500 10.500a10.500 10 0 0 1 21 0C22.500 17 16 21 12 25.500z" fill="#ea1c24"/><path d="M7.500 6l9 9M16.500 6l-9 9" stroke="#000" stroke-width="2.600"/></svg>
<!-- check box icon -->
<svg style="left:444px;top:106px" width="27" height="27" viewBox="0 0 27 27"><rect x="1.500" y="1.500" width="23" height="23" fill="#fff" stroke="#111" stroke-width="1.600"/><path d="M11 1.500v9" stroke="#111" stroke-width="1.400" stroke-dasharray="1.500 1.500"/><path d="M11 11v13" stroke="#111" stroke-width="1.400"/><path d="M9 19.500l3.500 4.500L24 10.500" stroke="#2f9a1c" stroke-width="3" fill="none"/></svg>
<!-- polygon star -->
<svg style="left:482px;top:106px" width="27" height="27" viewBox="0 0 27 27"><path d="M1.500 24.500V16l10-13.500h5L11.500 14 18 8.500l5 7v9z" fill="#fff" stroke="#111" stroke-width="1.600" stroke-linejoin="round"/><use href="#star" x="15.500" y="15.500" width="9" height="9"/></svg>
<!-- zip icons -->
<svg style="left:528px;top:107px" width="26" height="25" viewBox="0 0 26 25"><rect x="1" y="1" width="15" height="22" fill="#b5714e" stroke="#5a3422" stroke-width="1"/><rect x="16" y="2" width="2" height="20" fill="#8a5238"/><path d="M8.500 1v15" stroke="#eee" stroke-width="2.200" stroke-dasharray="1.500 1"/><rect x="5.500" y="15.500" width="6" height="6" fill="#e4e4e4" stroke="#333" stroke-width=".8"/><path d="M7.500 18h2" stroke="#111" stroke-width="1.600"/><path d="M24 11.500h-5.500V9l-5 4.500 5 4.500v-2.500H24z" fill="#fff" stroke="#333" stroke-width="1"/></svg>
<svg style="left:565px;top:107px" width="26" height="25" viewBox="0 0 26 25"><rect x="1" y="1" width="15" height="22" fill="#fcf400" stroke="#6a6500" stroke-width="1"/><rect x="16" y="2" width="2" height="20" fill="#c8c100"/><path d="M8.500 1v15" stroke="#eee" stroke-width="2.200" stroke-dasharray="1.500 1"/><path d="M7.400 1v15M9.600 1v15" stroke="#555" stroke-width=".5"/><rect x="5.500" y="15.500" width="6" height="6" fill="#e4e4e4" stroke="#333" stroke-width=".8"/><path d="M7.500 18h2" stroke="#111" stroke-width="1.600"/><path d="M13 11.500h5.500V9l5 4.500-5 4.500v-2.500H13z" fill="#fff" stroke="#333" stroke-width="1"/></svg>
<svg style="left:602px;top:107px" width="26" height="25" viewBox="0 0 26 25"><rect x="1" y="1" width="16" height="22" fill="#b9b9b9" stroke="#111" stroke-width="1"/><path d="M1 1h3l2 7H1z" fill="#25a84e"/><path d="M1 12h5l3 5 .5 6H1z" fill="#14a3e6"/><path d="M13 16l3 7h1v-8z" fill="#25a84e"/><path d="M9.500 2.500v6M8 4.500l1.500-2" stroke="#111" stroke-width="1.100" fill="none"/><rect x="12" y="2" width="4.500" height="4.500" fill="#1b3f9a"/><path d="M12 11.500h6V9l5 4.500-5 4.500v-2.500h-6z" fill="#fff" stroke="#333" stroke-width="1"/></svg>
<!-- left vertical toolbar -->
<div class="a" style="left:48px;top:140px;width:1px;height:810px;background:#d8d8d8"></div>
<div class="a" style="left:10px;top:141px;width:28px;height:4px;background:repeating-linear-gradient(90deg,#b9b9b9 0,#b9b9b9 1px,transparent 1px,transparent 2px)"></div>
<div class="a" style="left:10px;top:569px;width:28px;height:4px;background:repeating-linear-gradient(90deg,#b9b9b9 0,#b9b9b9 1px,transparent 1px,transparent 2px)"></div>
<div class="a" style="left:0;top:563px;width:48px;height:1px;background:#d0d0d0;box-shadow:0 1px 0 #fff"></div>
<svg style="left:12px;top:153px" width="24" height="24" viewBox="0 0 24 24"><g transform="translate(-1.500 0) scale(1.040)"><path d="M4 4l7 15 6-15" fill="none" stroke="#3c5a7d" stroke-width="1.300"/><circle cx="4" cy="4" r="1.800" fill="#fff" stroke="#3c5a7d"/><circle cx="11" cy="19" r="1.800" fill="#fff" stroke="#3c5a7d"/><circle cx="17" cy="4" r="1.800" fill="#fff" stroke="#3c5a7d"/><path d="M17 4h5" stroke="#3c5a7d"/><circle cx="22" cy="4" r="1.600" fill="#fff" stroke="#3c5a7d"/></g><use href="#plusb" x="14" y="14.5" width="10.500" height="10.500"/></svg>
<svg style="left:12px;top:191px" width="24" height="24" viewBox="0 0 24 24"><g transform="translate(-1.500 0) scale(1.040)"><rect x="2" y="2" width="18" height="18" fill="#7ba3d6"/><g fill="#223a5e"><rect x="2" y="2" width="6" height="6"/><rect x="14" y="2" width="6" height="6"/><rect x="8" y="8" width="6" height="6"/><rect x="2" y="14" width="6" height="6"/></g><g fill="#4f7cb8"><rect x="8" y="2" width="6" height="6"/><rect x="2" y="8" width="6" height="6"/><rect x="14" y="8" width="6" height="6"/></g></g><use href="#plusb" x="14" y="14.5" width="10.500" height="10.500"/></svg>
<svg style="left:12px;top:229px" width="24" height="24" viewBox="0 0 24 24"><g transform="translate(-1.500 0) scale(1.040)"><path d="M3 7c0-3 3-5 6-5 2 0 3 .5 4 1.500 1-.8 2.500-1 4-.5 2.500 1 3 4 2 7-.5 1.500-1.500 2.500-2.500 3v5h-2.500v-4c-1 .5-2 .5-3 0v2.500c0 1.500-2 2-3 1l-1-5C4.500 12 3 10 3 7z" fill="#5e86bd" stroke="#2b4468" stroke-width="1.100"/><path d="M9 5c-1 2-1 5 0 8M13 4v8" stroke="#2b4468" stroke-width="1" fill="none"/></g><use href="#plusb" x="14" y="14.5" width="10.500" height="10.500"/></svg>
<svg style="left:12px;top:267px" width="24" height="24" viewBox="0 0 24 24"><g transform="translate(-1.500 0) scale(1.040)"><path d="M2.500 22C5 12 11 4 21 1.500c0 3-1 6-3 8.500l-3 .5 1.500 1.500c-2.500 3-6 5-10 5.500z" fill="#6f97cb" stroke="#2b4468" stroke-width="1"/><path d="M3 21c4-7 9-13 17-18.500" stroke="#e7eef8" stroke-width=".9" fill="none"/></g><use href="#plusb" x="14" y="14.5" width="10.500" height="10.500"/></svg>
<svg style="left:12px;top:305px" width="24" height="24" viewBox="0 0 24 24"><g transform="translate(-1.500 0) scale(1.040)"><path d="M2 2c8 1 15 5 18 13l-5 1 2 3C10 20 5 22 2 23c4-6 4-14 0-21z" fill="#5e86bd" stroke="#2b4468" stroke-width="1"/><path d="M5 4c4 5 5 11 2.500 17M10 6c3 4 4 9 2.500 13M14.500 9c2 3 2.500 6 2 9" stroke="#2b4468" stroke-width=".9" fill="none"/></g><use href="#plusb" x="14" y="14.5" width="10.500" height="10.500"/></svg>
<svg style="left:12px;top:343px" width="24" height="24" viewBox="0 0 24 24"><g transform="translate(-1.500 0) scale(1.040)"><rect x="2" y="3.500" width="19" height="14" rx="5" fill="#6d92c8" stroke="#1f3557" stroke-width="1.800"/></g><use href="#plusb" x="14" y="14.5" width="10.500" height="10.500"/></svg>
<svg style="left:12px;top:381px" width="24" height="24" viewBox="0 0 24 24"><g transform="translate(-1.500 0) scale(1.040)"><rect x="2" y="3.500" width="19" height="14" rx="5" fill="#6d92c8" stroke="#1f3557" stroke-width="1.800"/><g fill="#223a5e"><rect x="4" y="5" width="5" height="4"/><rect x="14" y="5" width="5" height="4"/><rect x="9" y="9" width="5" height="4"/><rect x="4" y="13" width="4" height="3"/></g></g><use href="#plusb" x="14" y="14.5" width="10.500" height="10.500"/></svg>
<svg style="left:12px;top:419px" width="24" height="24" viewBox="0 0 24 24"><g transform="translate(-1.500 0) scale(1.040)"><circle cx="11" cy="11" r="9.500" fill="#8eaedb" stroke="#5e7eae" stroke-width="1"/><path d="M4 8c2-1 4 0 5 1s0 3 2 3 2-3 4-3 3 1 4 0M5 15c2-1 4 1 6 1s4-2 6 0" stroke="#e9f0fa" stroke-width="1.500" fill="none"/><path d="M2 11h18M11 1.500v19" stroke="#5e7eae" stroke-width=".7"/></g><use href="#plusb" x="14" y="14.5" width="10.500" height="10.500"/></svg>
<svg style="left:12px;top:457px" width="24" height="24" viewBox="0 0 24 24"><g transform="translate(-1.500 0) scale(1.040)"><circle cx="11" cy="11" r="9.500" fill="#fff" stroke="#1f3557" stroke-width="1.300"/><path d="M2.500 7h17M1.500 11h19M2.500 15h17" stroke="#1f3557" stroke-width="1.500"/><ellipse cx="11" cy="11" rx="4.500" ry="9.500" fill="none" stroke="#1f3557" stroke-width="1.300"/><path d="M11 1.500v19" stroke="#1f3557" stroke-width="1.200"/><path d="M3 5c5 2 11 2 16 0" stroke="#4f7cb8" stroke-width="2" fill="none"/></g><use href="#plusb" x="14" y="14.5" width="10.500" height="10.500"/></svg>
<svg style="left:12px;top:495px" width="24" height="24" viewBox="0 0 24 24"><g transform="translate(-1.500 0) scale(1.040)"><circle cx="11" cy="11" r="9.500" fill="#b9cdeb" stroke="#6f8fc0" stroke-width="1"/><path d="M2 11h18M11 1.500v19M4 5.500c4 2 10 2 14 0M4 16.500c4-2 10-2 14 0" stroke="#7f9fd0" stroke-width=".7" fill="none"/><path d="M5 5l5.500 11L15 5" fill="none" stroke="#27405f" stroke-width="1.200"/><circle cx="5" cy="5" r="1.500" fill="#fff" stroke="#27405f"/><circle cx="10.500" cy="16" r="1.500" fill="#fff" stroke="#27405f"/><circle cx="15" cy="5" r="1.500" fill="#fff" stroke="#27405f"/></g><use href="#plusb" x="14" y="14.5" width="10.500" height="10.500"/></svg>
<svg style="left:5px;top:532px" width="40" height="26" viewBox="0 0 40 26"><path d="M3 4l7 15 6-15" fill="none" stroke="#9a9a9a" stroke-width="1.200"/><circle cx="3" cy="4" r="1.700" fill="#fff" stroke="#9a9a9a"/><circle cx="10" cy="19" r="1.700" fill="#fff" stroke="#9a9a9a"/><circle cx="16" cy="4" r="1.700" fill="#fff" stroke="#9a9a9a"/><path d="M16 4h5" stroke="#9a9a9a"/><circle cx="21" cy="4" r="1.500" fill="#fff" stroke="#9a9a9a"/><rect x="15.500" y="16.500" width="8" height="8" rx="1.500" fill="#dcdcdc" stroke="#c2c2c2"/><path d="M19.500 18v5M17 20.500h5M17.800 18.800l3.400 3.400M21.200 18.800l-3.400 3.400" stroke="#f6f6f6" stroke-width=".8"/><path d="M31 10h9l-4.500 5z" fill="#aaa"/></svg>
<svg style="left:12px;top:581px" width="26" height="26" viewBox="0 0 26 26"><path d="M13.500 1v24M1 13.500h24" stroke="#222" stroke-width="1"/><circle cx="13.500" cy="13.500" r="4" fill="#f0f0f0" stroke="#e02020" stroke-width="1" stroke-dasharray="2 1.500"/></svg>
<svg style="left:11px;top:618px" width="28" height="26" viewBox="0 0 28 26"><path d="M2 3l5 19 3-14" fill="none" stroke="#3f6fb0" stroke-width="1"/><path d="M9 8c2-4 8-6 14-5.500 2 3 .5 7-2 9-1.500 3-4 5-8 6z" fill="#fff" stroke="#333" stroke-width="1"/><path d="M10 21l4-13 7-3 0 6-5 1" fill="none" stroke="#e02020" stroke-width="1.200"/><g fill="#e02020"><circle cx="14" cy="8" r="1.300"/><circle cx="21" cy="5" r="1.300"/><circle cx="21" cy="11" r="1.300"/><circle cx="10" cy="21" r="1.300"/></g><g fill="#3f6fb0"><circle cx="2" cy="3" r="1.200"/><circle cx="7" cy="22" r="1.200"/><circle cx="14" cy="22" r="1"/><circle cx="18" cy="19" r="1"/></g></svg>
<!-- layers dock -->
<div class="t" style="left:53px;top:145px;font-size:11.500px;letter-spacing:-.4px">Layers</div>
<div class="a" style="left:50px;top:161px;width:346px;height:1px;background:#d9d9d9"></div>
<svg style="left:371px;top:142px" width="24" height="10" viewBox="0 0 24 10" fill="none" stroke="#444" stroke-width="1"><rect x=".5" y=".5" width="9" height="9" rx="1.500"/><rect x="3" y="3" width="4" height="4"/><rect x="13.500" y=".5" width="9" height="9" rx="1.500"/><path d="M15.500 2.500l5 5M20.500 2.500l-5 5"/></svg>
<svg style="left:60px;top:166px" width="18" height="20" viewBox="0 0 18 20" fill="none" stroke="#555" stroke-width="1"><path d="M1.500 8.500v9h9v-2"/><rect x="4.500" y="5.500" width="9" height="10" fill="#f0f0f0"/><path d="M8 8V3a1.800 1.800 0 0 1 3.600 0v8" stroke="#4a78b4" stroke-width="1.200"/></svg>
<svg style="left:95px;top:166px" width="26" height="24" viewBox="0 0 26 24"><path d="M1 9c6-8 16-8 21 0-5 6-15 6-21 0z" fill="#fff" stroke="#888" stroke-width=".9"/><path d="M2 6c6-6 14-6 19-1" fill="none" stroke="#999" stroke-width=".8"/><circle cx="11.500" cy="8.500" r="4.200" fill="#4f86cc"/><circle cx="11.500" cy="8.500" r="1.700" fill="#1d3a66"/><path d="M17 16h6l-3 3.500z" fill="#000"/></svg>
<svg style="left:131px;top:164px" width="24" height="24" viewBox="0 0 24 24"><path d="M1 3.500C1 1.500 6 1 11.500 1S22 1.500 22 3.500L13.500 12.500v8c0 1.500-4 1.500-4 0v-8z" fill="#2eb350" stroke="#1b7e34" stroke-width=".8"/><ellipse cx="11.500" cy="3.300" rx="9.500" ry="1.800" fill="#8be09e" stroke="#1b7e34" stroke-width=".6"/></svg>
<svg style="left:168px;top:166px" width="24" height="20" viewBox="0 0 24 20"><rect x=".7" y=".7" width="21" height="18" fill="#fff" stroke="#2a62c8" stroke-width="1.400"/><rect x=".7" y=".7" width="21" height="3" fill="#3f7ae0"/><path d="M4.500 4v11h4M4.500 9h4" fill="none" stroke="#666" stroke-width="1.200"/><rect x="10" y="6" width="3.500" height="3.500" fill="#f59a23"/><rect x="10" y="12" width="3.500" height="3.500" fill="#f59a23"/><path d="M17 2.500v9h-2.800l4.300 5.500 4.300-5.500H20V2.500z" fill="#f01010" transform="translate(-2.500 0)"/></svg>
<svg style="left:205px;top:166px" width="24" height="20" viewBox="0 0 24 20"><rect x=".7" y=".7" width="21" height="18" fill="#fff" stroke="#2a62c8" stroke-width="1.400"/><rect x=".7" y=".7" width="21" height="3" fill="#3f7ae0"/><path d="M4.500 4v11h4M4.500 9h4" fill="none" stroke="#666" stroke-width="1.200"/><rect x="10" y="6" width="3.500" height="3.500" fill="#f59a23"/><rect x="10" y="12" width="3.500" height="3.500" fill="#f59a23"/><path d="M17 2.500v9h-2.800l4.300 5.500 4.300-5.500H20V2.500z" fill="#f01010" transform="translate(-2.500 0)"/></svg>
<div class="a" style="left:50px;top:197px;width:347px;height:754px;background:#fff;border:1px solid #a5a5a5"></div>
<div class="a" style="left:398px;top:524px;width:4px;height:40px;background:repeating-linear-gradient(180deg,#c4c4c4 0,#c4c4c4 1px,transparent 1px,transparent 2px)"></div>
<div class="a" style="left:51px;top:423px;width:345px;height:16px;background:#ebebeb"></div>
<div class="a" style="left:61px;top:212px;width:1px;height:490px;background:repeating-linear-gradient(180deg,#a0a0a0 0,#a0a0a0 1px,transparent 1px,transparent 2px)"></div>
<div class="a" style="left:81px;top:212px;width:1px;height:27px;background:repeating-linear-gradient(180deg,#a0a0a0 0,#a0a0a0 1px,transparent 1px,transparent 2px)"></div>
<div class="a" style="left:101px;top:244px;width:1px;height:107px;background:repeating-linear-gradient(180deg,#a0a0a0 0,#a0a0a0 1px,transparent 1px,transparent 2px)"></div>
<div class="a" style="left:81px;top:420px;width:1px;height:59px;background:repeating-linear-gradient(180deg,#a0a0a0 0,#a0a0a0 1px,transparent 1px,transparent 2px)"></div>
<div class="a" style="left:101px;top:436px;width:1px;height:27px;background:repeating-linear-gradient(180deg,#a0a0a0 0,#a0a0a0 1px,transparent 1px,transparent 2px)"></div>
<div class="a" style="left:101px;top:484px;width:1px;height:27px;background:repeating-linear-gradient(180deg,#a0a0a0 0,#a0a0a0 1px,transparent 1px,transparent 2px)"></div>
<div class="a" style="left:81px;top:532px;width:1px;height:91px;background:repeating-linear-gradient(180deg,#a0a0a0 0,#a0a0a0 1px,transparent 1px,transparent 2px)"></div>
<div class="a" style="left:101px;top:548px;width:1px;height:27px;background:repeating-linear-gradient(180deg,#a0a0a0 0,#a0a0a0 1px,transparent 1px,transparent 2px)"></div>
<svg style="left:57px;top:203px" width="9" height="9" viewBox="0 0 9 9"><rect x=".5" y=".5" width="8" height="8" fill="#fff" stroke="#919191"/><path d="M2 4.500h5" stroke="#000" stroke-width="1"/></svg>
<div class="a" style="left:67px;top:207px;width:6px;height:1px;background:repeating-linear-gradient(90deg,#a0a0a0 0,#a0a0a0 1px,transparent 1px,transparent 2px)"></div>
<div class="cb" style="left:74px;top:201px"><svg style="left:0;top:0" width="11" height="11" viewBox="0 0 11 11"><path d="M1.800 5.200L4.300 8.600L9.400 1.800" fill="none" stroke="#000" stroke-width="2"/></svg></div>
<svg style="left:93px;top:199px" width="15" height="16" viewBox="0 0 15 16" fill="none" stroke="#5a5a5a" stroke-width="1"><path d="M1.500 6.500v8h7.500v-1.500"/><rect x="3.500" y="3.500" width="8" height="9.500" fill="#f4f4f4"/><path d="M6.500 6.500V2.500a1.600 1.600 0 0 1 3.200 0v6.500" stroke="#4a78b4" stroke-width="1.100"/></svg>
<div class="row" style="left:114px;top:199.5px;letter-spacing:-.22px;letter-spacing:-0.469px;">edges</div>
<svg style="left:77px;top:219px" width="9" height="9" viewBox="0 0 9 9"><rect x=".5" y=".5" width="8" height="8" fill="#fff" stroke="#919191"/><path d="M2 4.500h5M4.500 2v5" stroke="#000" stroke-width="1"/></svg>
<div class="a" style="left:87px;top:223px;width:6px;height:1px;background:repeating-linear-gradient(90deg,#a0a0a0 0,#a0a0a0 1px,transparent 1px,transparent 2px)"></div>
<div class="cb" style="left:95px;top:217px"><svg style="left:0;top:0" width="11" height="11" viewBox="0 0 11 11"><path d="M1.800 5.200L4.300 8.600L9.400 1.800" fill="none" stroke="#000" stroke-width="2"/></svg></div>
<svg style="left:113px;top:215px" width="17" height="16" viewBox="0 0 17 16"><path d="M2 3l5 11 5-11 3-1" fill="none" stroke="#555" stroke-width=".9"/><circle cx="2" cy="3" r="1.100" fill="#fff" stroke="#777" stroke-width=".7"/><circle cx="7" cy="14" r="1.100" fill="#fff" stroke="#777" stroke-width=".7"/><circle cx="12" cy="3" r="1.100" fill="#fff" stroke="#777" stroke-width=".7"/><circle cx="15" cy="2" r="1" fill="#fff" stroke="#777" stroke-width=".7"/></svg>
<div class="row" style="left:135.5px;top:215.5px;font-weight:bold;letter-spacing:.42px;letter-spacing:0.334px;">edges_06023</div>
<svg style="left:77px;top:235px" width="9" height="9" viewBox="0 0 9 9"><rect x=".5" y=".5" width="8" height="8" fill="#fff" stroke="#919191"/><path d="M2 4.500h5" stroke="#000" stroke-width="1"/></svg>
<div class="a" style="left:87px;top:239px;width:6px;height:1px;background:repeating-linear-gradient(90deg,#a0a0a0 0,#a0a0a0 1px,transparent 1px,transparent 2px)"></div>
<div class="cb" style="left:95px;top:233px"><svg style="left:0;top:0" width="11" height="11" viewBox="0 0 11 11"><path d="M1.800 5.200L4.300 8.600L9.400 1.800" fill="none" stroke="#000" stroke-width="2"/></svg></div>
<svg style="left:113px;top:230px" width="17" height="17" viewBox="0 0 17 17"><path d="M2 4l5 11 5-11 3-1" fill="none" stroke="#666" stroke-width=".9"/><path d="M4 15.500l1.200-4L12 2l2.800 2-6.800 9.500z" fill="#e8752a" stroke="#a84a12" stroke-width=".7"/><path d="M12 2l1-1.200 2.800 2L14.800 4z" fill="#d44"/><path d="M4 15.500l1.200-4 2.800 2z" fill="#f2dcae"/></svg>
<div class="row" style="left:135.5px;top:231.5px;font-weight:bold;letter-spacing:.42px;letter-spacing:0.334px;">edges_06093</div>
<div class="a" style="left:102px;top:255px;width:11px;height:1px;background:repeating-linear-gradient(90deg,#a0a0a0 0,#a0a0a0 1px,transparent 1px,transparent 2px)"></div>
<div class="cb" style="left:114px;top:249px"><svg style="left:0;top:0" width="11" height="11" viewBox="0 0 11 11"><path d="M1.800 5.200L4.300 8.600L9.400 1.800" fill="none" stroke="#000" stroke-width="2"/></svg></div>
<svg style="left:133px;top:251px" width="16" height="8" viewBox="0 0 16 8"><path d="M0 3h16M0 5h16" stroke="#8a7a4a" stroke-width="1"/><path d="M3.500 1.500v5M8 1.500v5M12.500 1.500v5" stroke="#6a5a2a" stroke-width="1"/></svg>
<div class="row" style="left:154.5px;top:247.5px;letter-spacing:-.22px;">Railroads (scale &gt; 1:25,000)</div>
<div class="a" style="left:102px;top:271px;width:11px;height:1px;background:repeating-linear-gradient(90deg,#a0a0a0 0,#a0a0a0 1px,transparent 1px,transparent 2px)"></div>
<div class="cb" style="left:114px;top:265px"><svg style="left:0;top:0" width="11" height="11" viewBox="0 0 11 11"><path d="M1.800 5.200L4.300 8.600L9.400 1.800" fill="none" stroke="#000" stroke-width="2"/></svg></div>
<svg style="left:133px;top:267px" width="16" height="8" viewBox="0 0 16 8"><path d="M0 4h16" stroke="#5a4a1a" stroke-width="1"/><path d="M4.500 2v4M11.500 2v4" stroke="#5a4a1a" stroke-width="1"/></svg>
<div class="row" style="left:154.5px;top:263.5px;letter-spacing:-.22px;">Railroads (scale &lt; 1:25,000)</div>
<div class="a" style="left:102px;top:287px;width:11px;height:1px;background:repeating-linear-gradient(90deg,#a0a0a0 0,#a0a0a0 1px,transparent 1px,transparent 2px)"></div>
<div class="cb" style="left:114px;top:281px"><svg style="left:0;top:0" width="11" height="11" viewBox="0 0 11 11"><path d="M1.800 5.200L4.300 8.600L9.400 1.800" fill="none" stroke="#000" stroke-width="2"/></svg></div>
<div class="a" style="left:133px;top:285px;width:16px;height:4px;background:#f6f0b6;border-top:1px solid #c8c08a;border-bottom:1px solid #c8c08a"></div>
<div class="row" style="left:154.5px;top:279.5px;letter-spacing:-.22px;">Roads (scale &gt; 1:25,000)</div>
<div class="a" style="left:102px;top:303px;width:11px;height:1px;background:repeating-linear-gradient(90deg,#a0a0a0 0,#a0a0a0 1px,transparent 1px,transparent 2px)"></div>
<div class="cb" style="left:114px;top:297px"><svg style="left:0;top:0" width="11" height="11" viewBox="0 0 11 11"><path d="M1.800 5.200L4.300 8.600L9.400 1.800" fill="none" stroke="#000" stroke-width="2"/></svg></div>
<div class="a" style="left:133px;top:301.5px;width:16px;height:3px;background:#f8f4cc;border-top:1px solid #dcd6a8;border-bottom:1px solid #dcd6a8"></div>
<div class="row" style="left:154.5px;top:295.5px;letter-spacing:-.22px;">Roads (scale &lt; 1:25,000)</div>
<div class="a" style="left:102px;top:319px;width:11px;height:1px;background:repeating-linear-gradient(90deg,#a0a0a0 0,#a0a0a0 1px,transparent 1px,transparent 2px)"></div>
<div class="cb" style="left:114px;top:313px"><svg style="left:0;top:0" width="11" height="11" viewBox="0 0 11 11"><path d="M1.800 5.200L4.300 8.600L9.400 1.800" fill="none" stroke="#000" stroke-width="2"/></svg></div>
<div class="a" style="left:133px;top:318.5px;width:16px;height:1.400px;background:#3f74c8"></div>
<div class="row" style="left:154.5px;top:311.5px;letter-spacing:-.22px;">Linear Water</div>
<div class="a" style="left:102px;top:335px;width:11px;height:1px;background:repeating-linear-gradient(90deg,#a0a0a0 0,#a0a0a0 1px,transparent 1px,transparent 2px)"></div>
<div class="cb" style="left:114px;top:329px"><svg style="left:0;top:0" width="11" height="11" viewBox="0 0 11 11"><path d="M1.800 5.200L4.300 8.600L9.400 1.800" fill="none" stroke="#000" stroke-width="2"/></svg></div>
<svg style="left:133px;top:334px" width="16" height="2" viewBox="0 0 16 2"><path d="M0 1h16" stroke="#222" stroke-width="1" stroke-dasharray="4 2 1 2 1 2"/></svg>
<div class="row" style="left:154.5px;top:327.5px;letter-spacing:-.22px;">Non-visible boundary</div>
<div class="a" style="left:102px;top:351px;width:11px;height:1px;background:repeating-linear-gradient(90deg,#a0a0a0 0,#a0a0a0 1px,transparent 1px,transparent 2px)"></div>
<div class="cb" style="left:114px;top:345px"><svg style="left:0;top:0" width="11" height="11" viewBox="0 0 11 11"><path d="M1.800 5.200L4.300 8.600L9.400 1.800" fill="none" stroke="#000" stroke-width="2"/></svg></div>
<svg style="left:133px;top:347px" width="8" height="8" viewBox="0 0 8 8"><path d="M4.500 1L1.500 4l3 3" fill="none" stroke="#000" stroke-width="1.500"/></svg>
<div class="row" style="left:154.5px;top:343.5px;letter-spacing:-.22px;">Deleted Edges</div>
<svg style="left:57px;top:363px" width="9" height="9" viewBox="0 0 9 9"><rect x=".5" y=".5" width="8" height="8" fill="#fff" stroke="#919191"/><path d="M2 4.500h5M4.500 2v5" stroke="#000" stroke-width="1"/></svg>
<div class="a" style="left:67px;top:367px;width:6px;height:1px;background:repeating-linear-gradient(90deg,#a0a0a0 0,#a0a0a0 1px,transparent 1px,transparent 2px)"></div>
<div class="cb" style="left:74px;top:361px"></div>
<svg style="left:93px;top:359px" width="15" height="16" viewBox="0 0 15 16" fill="none" stroke="#5a5a5a" stroke-width="1"><path d="M1.500 6.500v8h7.500v-1.500"/><rect x="3.500" y="3.500" width="8" height="9.500" fill="#f4f4f4"/><path d="M6.500 6.500V2.500a1.600 1.600 0 0 1 3.200 0v6.500" stroke="#4a78b4" stroke-width="1.100"/></svg>
<div class="row" style="left:114px;top:359.5px;letter-spacing:-.22px;letter-spacing:-0.52px;">2010_Census_Tract</div>
<svg style="left:57px;top:379px" width="9" height="9" viewBox="0 0 9 9"><rect x=".5" y=".5" width="8" height="8" fill="#fff" stroke="#919191"/><path d="M2 4.500h5M4.500 2v5" stroke="#000" stroke-width="1"/></svg>
<div class="a" style="left:67px;top:383px;width:6px;height:1px;background:repeating-linear-gradient(90deg,#a0a0a0 0,#a0a0a0 1px,transparent 1px,transparent 2px)"></div>
<div class="cb" style="left:74px;top:377px"></div>
<svg style="left:93px;top:375px" width="15" height="16" viewBox="0 0 15 16" fill="none" stroke="#5a5a5a" stroke-width="1"><path d="M1.500 6.500v8h7.500v-1.500"/><rect x="3.500" y="3.500" width="8" height="9.500" fill="#f4f4f4"/><path d="M6.500 6.500V2.500a1.600 1.600 0 0 1 3.200 0v6.500" stroke="#4a78b4" stroke-width="1.100"/></svg>
<div class="row" style="left:114px;top:375.5px;letter-spacing:-.22px;letter-spacing:-0.659px;">2010_Census_Block</div>
<div class="a" style="left:62px;top:399px;width:11px;height:1px;background:repeating-linear-gradient(90deg,#a0a0a0 0,#a0a0a0 1px,transparent 1px,transparent 2px)"></div>
<div class="cb" style="left:74px;top:393px"><svg style="left:0;top:0" width="11" height="11" viewBox="0 0 11 11"><path d="M1.800 5.200L4.300 8.600L9.400 1.800" fill="none" stroke="#000" stroke-width="2"/></svg></div>
<svg style="left:93px;top:391px" width="15" height="16" viewBox="0 0 15 16" fill="none" stroke="#5a5a5a" stroke-width="1"><path d="M1.500 6.500v8h7.500v-1.500"/><rect x="3.500" y="3.500" width="8" height="9.500" fill="#f4f4f4"/><path d="M6.500 6.500V2.500a1.600 1.600 0 0 1 3.200 0v6.500" stroke="#4a78b4" stroke-width="1.100"/></svg>
<div class="row" style="left:114px;top:391.5px;letter-spacing:-.22px;letter-spacing:-0.498px;">changes</div>
<svg style="left:57px;top:411px" width="9" height="9" viewBox="0 0 9 9"><rect x=".5" y=".5" width="8" height="8" fill="#fff" stroke="#919191"/><path d="M2 4.500h5" stroke="#000" stroke-width="1"/></svg>
<div class="a" style="left:67px;top:415px;width:6px;height:1px;background:repeating-linear-gradient(90deg,#a0a0a0 0,#a0a0a0 1px,transparent 1px,transparent 2px)"></div>
<div class="cb" style="left:74px;top:409px"><svg style="left:0;top:0" width="11" height="11" viewBox="0 0 11 11"><path d="M1.800 5.200L4.300 8.600L9.400 1.800" fill="none" stroke="#000" stroke-width="2"/></svg></div>
<svg style="left:93px;top:407px" width="15" height="16" viewBox="0 0 15 16" fill="none" stroke="#5a5a5a" stroke-width="1"><path d="M1.500 6.500v8h7.500v-1.500"/><rect x="3.500" y="3.500" width="8" height="9.500" fill="#f4f4f4"/><path d="M6.500 6.500V2.500a1.600 1.600 0 0 1 3.200 0v6.500" stroke="#4a78b4" stroke-width="1.100"/></svg>
<div class="row" style="left:114px;top:407.5px;letter-spacing:-.22px;letter-spacing:-0.3px;">faces</div>
<svg style="left:77px;top:427px" width="9" height="9" viewBox="0 0 9 9"><rect x=".5" y=".5" width="8" height="8" fill="#fff" stroke="#919191"/><path d="M2 4.500h5" stroke="#000" stroke-width="1"/></svg>
<div class="a" style="left:87px;top:431px;width:6px;height:1px;background:repeating-linear-gradient(90deg,#a0a0a0 0,#a0a0a0 1px,transparent 1px,transparent 2px)"></div>
<div class="cb" style="left:95px;top:425px"><svg style="left:0;top:0" width="11" height="11" viewBox="0 0 11 11"><path d="M1.800 5.200L4.300 8.600L9.400 1.800" fill="none" stroke="#000" stroke-width="2"/></svg></div>
<svg style="left:113px;top:424px" width="17" height="14" viewBox="0 0 17 14"><path d="M1.500 5c0-3 3-4 5.500-3.500s3 1 5 .5 4 .5 4 3-1 4-2 6c-1-1.500-3-2-5-1.500S4.500 11 3 10 1.500 7 1.500 5z" fill="#7fa6d4" stroke="#46689a" stroke-width=".9"/></svg>
<div class="row" style="left:135.5px;top:423.5px;font-weight:bold;letter-spacing:.42px;text-decoration:underline;letter-spacing:0.291px;">faces_06023</div>
<div class="a" style="left:102px;top:447px;width:11px;height:1px;background:repeating-linear-gradient(90deg,#a0a0a0 0,#a0a0a0 1px,transparent 1px,transparent 2px)"></div>
<div class="cb" style="left:114px;top:441px"><svg style="left:0;top:0" width="11" height="11" viewBox="0 0 11 11"><path d="M1.800 5.200L4.300 8.600L9.400 1.800" fill="none" stroke="#000" stroke-width="2"/></svg></div>
<div class="row" style="left:154.5px;top:439.5px;letter-spacing:-.22px;letter-spacing:-0.285px;">zoomed out (not outlined)</div>
<div class="a" style="left:102px;top:463px;width:11px;height:1px;background:repeating-linear-gradient(90deg,#a0a0a0 0,#a0a0a0 1px,transparent 1px,transparent 2px)"></div>
<div class="cb" style="left:114px;top:457px"><svg style="left:0;top:0" width="11" height="11" viewBox="0 0 11 11"><path d="M1.800 5.200L4.300 8.600L9.400 1.800" fill="none" stroke="#000" stroke-width="2"/></svg></div>
<div class="a" style="left:133px;top:455px;width:16px;height:16px;background:#fff;border:1px solid #bfe0c0"></div>
<div class="row" style="left:154.5px;top:455.5px;letter-spacing:-.22px;letter-spacing:-0.436px;">zoomed in (includes outline)</div>
<svg style="left:77px;top:475px" width="9" height="9" viewBox="0 0 9 9"><rect x=".5" y=".5" width="8" height="8" fill="#fff" stroke="#919191"/><path d="M2 4.500h5" stroke="#000" stroke-width="1"/></svg>
<div class="a" style="left:87px;top:479px;width:6px;height:1px;background:repeating-linear-gradient(90deg,#a0a0a0 0,#a0a0a0 1px,transparent 1px,transparent 2px)"></div>
<div class="cb" style="left:95px;top:473px"><svg style="left:0;top:0" width="11" height="11" viewBox="0 0 11 11"><path d="M1.800 5.200L4.300 8.600L9.400 1.800" fill="none" stroke="#000" stroke-width="2"/></svg></div>
<svg style="left:113px;top:472px" width="17" height="14" viewBox="0 0 17 14"><path d="M1.500 5c0-3 3-4 5.500-3.500s3 1 5 .5 4 .5 4 3-1 4-2 6c-1-1.500-3-2-5-1.500S4.500 11 3 10 1.500 7 1.500 5z" fill="#7fa6d4" stroke="#46689a" stroke-width=".9"/></svg>
<svg style="left:113px;top:470px" width="17" height="17" viewBox="0 0 17 17"><path d="M4 15.500l1.200-4L12 2l2.800 2-6.800 9.500z" fill="#e8752a" stroke="#a84a12" stroke-width=".7"/><path d="M4 15.500l1.200-4 2.800 2z" fill="#f2dcae"/></svg>
<div class="row" style="left:135.5px;top:471.5px;font-weight:bold;letter-spacing:.42px;letter-spacing:0.291px;">faces_06093</div>
<div class="a" style="left:102px;top:495px;width:11px;height:1px;background:repeating-linear-gradient(90deg,#a0a0a0 0,#a0a0a0 1px,transparent 1px,transparent 2px)"></div>
<div class="cb" style="left:114px;top:489px"><svg style="left:0;top:0" width="11" height="11" viewBox="0 0 11 11"><path d="M1.800 5.200L4.300 8.600L9.400 1.800" fill="none" stroke="#000" stroke-width="2"/></svg></div>
<div class="row" style="left:154.5px;top:487.5px;letter-spacing:-.22px;letter-spacing:-0.285px;">zoomed out (not outlined)</div>
<div class="a" style="left:102px;top:511px;width:11px;height:1px;background:repeating-linear-gradient(90deg,#a0a0a0 0,#a0a0a0 1px,transparent 1px,transparent 2px)"></div>
<div class="cb" style="left:114px;top:505px"><svg style="left:0;top:0" width="11" height="11" viewBox="0 0 11 11"><path d="M1.800 5.200L4.300 8.600L9.400 1.800" fill="none" stroke="#000" stroke-width="2"/></svg></div>
<div class="a" style="left:133px;top:503px;width:16px;height:16px;background:#fff;border:1px solid #bfe0c0"></div>
<div class="row" style="left:154.5px;top:503.5px;letter-spacing:-.22px;letter-spacing:-0.436px;">zoomed in (includes outline)</div>
<svg style="left:57px;top:523px" width="9" height="9" viewBox="0 0 9 9"><rect x=".5" y=".5" width="8" height="8" fill="#fff" stroke="#919191"/><path d="M2 4.500h5" stroke="#000" stroke-width="1"/></svg>
<div class="a" style="left:67px;top:527px;width:6px;height:1px;background:repeating-linear-gradient(90deg,#a0a0a0 0,#a0a0a0 1px,transparent 1px,transparent 2px)"></div>
<div class="cb g" style="left:74px;top:521px"><svg style="left:0;top:0" width="11" height="11" viewBox="0 0 11 11"><path d="M1.800 5.200L4.300 8.600L9.400 1.800" fill="none" stroke="#9d9d9d" stroke-width="2"/></svg></div>
<svg style="left:93px;top:519px" width="15" height="16" viewBox="0 0 15 16" fill="none" stroke="#5a5a5a" stroke-width="1"><path d="M1.500 6.500v8h7.500v-1.500"/><rect x="3.500" y="3.500" width="8" height="9.500" fill="#f4f4f4"/><path d="M6.500 6.500V2.500a1.600 1.600 0 0 1 3.200 0v6.500" stroke="#4a78b4" stroke-width="1.100"/></svg>
<div class="row" style="left:114px;top:519.5px;letter-spacing:-.22px;letter-spacing:-0.481px;">Tribal_Layers</div>
<svg style="left:77px;top:539px" width="9" height="9" viewBox="0 0 9 9"><rect x=".5" y=".5" width="8" height="8" fill="#fff" stroke="#919191"/><path d="M2 4.500h5" stroke="#000" stroke-width="1"/></svg>
<div class="a" style="left:87px;top:543px;width:6px;height:1px;background:repeating-linear-gradient(90deg,#a0a0a0 0,#a0a0a0 1px,transparent 1px,transparent 2px)"></div>
<div class="cb" style="left:95px;top:537px"><svg style="left:0;top:0" width="11" height="11" viewBox="0 0 11 11"><path d="M1.800 5.200L4.300 8.600L9.400 1.800" fill="none" stroke="#000" stroke-width="2"/></svg></div>
<svg style="left:113px;top:536px" width="17" height="14" viewBox="0 0 17 14"><path d="M1.500 5c0-3 3-4 5.500-3.500s3 1 5 .5 4 .5 4 3-1 4-2 6c-1-1.500-3-2-5-1.500S4.500 11 3 10 1.500 7 1.500 5z" fill="#dcdcdc" stroke="#8c8c8c" stroke-width=".9"/></svg>
<div class="row" style="left:135.5px;top:535.5px;font-weight:bold;letter-spacing:.42px;letter-spacing:0.253px;">American_Indian_Area</div>
<div class="a" style="left:102px;top:559px;width:11px;height:1px;background:repeating-linear-gradient(90deg,#a0a0a0 0,#a0a0a0 1px,transparent 1px,transparent 2px)"></div>
<div class="cb" style="left:114px;top:553px"><svg style="left:0;top:0" width="11" height="11" viewBox="0 0 11 11"><path d="M1.800 5.200L4.300 8.600L9.400 1.800" fill="none" stroke="#000" stroke-width="2"/></svg></div>
<div class="a" style="left:133px;top:551px;width:16px;height:16px;background:#f0888e;border:1px solid #ee7c84"></div>
<div class="row" style="left:154.5px;top:551.5px;letter-spacing:-.22px;letter-spacing:-0.307px;">Reservation</div>
<div class="a" style="left:102px;top:575px;width:11px;height:1px;background:repeating-linear-gradient(90deg,#a0a0a0 0,#a0a0a0 1px,transparent 1px,transparent 2px)"></div>
<div class="cb" style="left:114px;top:569px"><svg style="left:0;top:0" width="11" height="11" viewBox="0 0 11 11"><path d="M1.800 5.200L4.300 8.600L9.400 1.800" fill="none" stroke="#000" stroke-width="2"/></svg></div>
<div class="a" style="left:133px;top:567px;width:16px;height:16px;background:#f0f0b4;border:1px solid #e6e6a8"></div>
<div class="row" style="left:154.5px;top:567.5px;letter-spacing:-.22px;letter-spacing:-0.219px;">Off-reservation Trust Land</div>
<div class="a" style="left:82px;top:591px;width:11px;height:1px;background:repeating-linear-gradient(90deg,#a0a0a0 0,#a0a0a0 1px,transparent 1px,transparent 2px)"></div>
<div class="cb" style="left:95px;top:585px"><svg style="left:0;top:0" width="11" height="11" viewBox="0 0 11 11"><path d="M1.800 5.200L4.300 8.600L9.400 1.800" fill="none" stroke="#000" stroke-width="2"/></svg></div>
<div class="a" style="left:113px;top:583px;width:16px;height:16px;background:#8fb8de;border:2px solid #4f8fd0"></div>
<div class="row" style="left:135.5px;top:583.5px;font-weight:bold;letter-spacing:.42px;letter-spacing:0.138px;">American_Indian_Tribal_Subdivision</div>
<div class="a" style="left:82px;top:607px;width:11px;height:1px;background:repeating-linear-gradient(90deg,#a0a0a0 0,#a0a0a0 1px,transparent 1px,transparent 2px)"></div>
<div class="cb" style="left:95px;top:601px"></div>
<div class="a" style="left:113px;top:599px;width:16px;height:16px;background:#d5e0f5;border:2px solid #b4c8ea"></div>
<div class="row" style="left:135.5px;top:599.5px;font-weight:bold;letter-spacing:.42px;letter-spacing:0.147px;">Tribal_Census_Tract</div>
<div class="a" style="left:82px;top:623px;width:11px;height:1px;background:repeating-linear-gradient(90deg,#a0a0a0 0,#a0a0a0 1px,transparent 1px,transparent 2px)"></div>
<div class="cb" style="left:95px;top:617px"></div>
<div class="a" style="left:113px;top:615px;width:16px;height:16px;background:#a8d0b0;border:2px solid #5aa862"></div>
<div class="row" style="left:135.5px;top:615.5px;font-weight:bold;letter-spacing:.42px;letter-spacing:-0.032px;">Tribal_Block_Group</div>
<svg style="left:57px;top:635px" width="9" height="9" viewBox="0 0 9 9"><rect x=".5" y=".5" width="8" height="8" fill="#fff" stroke="#919191"/><path d="M2 4.500h5M4.500 2v5" stroke="#000" stroke-width="1"/></svg>
<div class="a" style="left:67px;top:639px;width:6px;height:1px;background:repeating-linear-gradient(90deg,#a0a0a0 0,#a0a0a0 1px,transparent 1px,transparent 2px)"></div>
<div class="cb g" style="left:74px;top:633px"><svg style="left:0;top:0" width="11" height="11" viewBox="0 0 11 11"><path d="M1.800 5.200L4.300 8.600L9.400 1.800" fill="none" stroke="#9d9d9d" stroke-width="2"/></svg></div>
<svg style="left:93px;top:631px" width="15" height="16" viewBox="0 0 15 16" fill="none" stroke="#5a5a5a" stroke-width="1"><path d="M1.500 6.500v8h7.500v-1.500"/><rect x="3.500" y="3.500" width="8" height="9.500" fill="#f4f4f4"/><path d="M6.500 6.500V2.500a1.600 1.600 0 0 1 3.200 0v6.500" stroke="#4a78b4" stroke-width="1.100"/></svg>
<div class="row" style="left:114px;top:631.5px;letter-spacing:-.22px;letter-spacing:-0.341px;">State_Level</div>
<svg style="left:57px;top:651px" width="9" height="9" viewBox="0 0 9 9"><rect x=".5" y=".5" width="8" height="8" fill="#fff" stroke="#919191"/><path d="M2 4.500h5M4.500 2v5" stroke="#000" stroke-width="1"/></svg>
<div class="a" style="left:67px;top:655px;width:6px;height:1px;background:repeating-linear-gradient(90deg,#a0a0a0 0,#a0a0a0 1px,transparent 1px,transparent 2px)"></div>
<div class="cb" style="left:74px;top:649px"><svg style="left:0;top:0" width="11" height="11" viewBox="0 0 11 11"><path d="M1.800 5.200L4.300 8.600L9.400 1.800" fill="none" stroke="#000" stroke-width="2"/></svg></div>
<svg style="left:93px;top:647px" width="15" height="16" viewBox="0 0 15 16" fill="none" stroke="#5a5a5a" stroke-width="1"><path d="M1.500 6.500v8h7.500v-1.500"/><rect x="3.500" y="3.500" width="8" height="9.500" fill="#f4f4f4"/><path d="M6.500 6.500V2.500a1.600 1.600 0 0 1 3.200 0v6.500" stroke="#4a78b4" stroke-width="1.100"/></svg>
<div class="row" style="left:114px;top:647.5px;letter-spacing:-.22px;letter-spacing:-0.217px;">Water_Features</div>
<svg style="left:57px;top:667px" width="9" height="9" viewBox="0 0 9 9"><rect x=".5" y=".5" width="8" height="8" fill="#fff" stroke="#919191"/><path d="M2 4.500h5M4.500 2v5" stroke="#000" stroke-width="1"/></svg>
<div class="a" style="left:67px;top:671px;width:6px;height:1px;background:repeating-linear-gradient(90deg,#a0a0a0 0,#a0a0a0 1px,transparent 1px,transparent 2px)"></div>
<div class="cb" style="left:74px;top:665px"><svg style="left:0;top:0" width="11" height="11" viewBox="0 0 11 11"><path d="M1.800 5.200L4.300 8.600L9.400 1.800" fill="none" stroke="#000" stroke-width="2"/></svg></div>
<svg style="left:93px;top:663px" width="15" height="16" viewBox="0 0 15 16" fill="none" stroke="#5a5a5a" stroke-width="1"><path d="M1.500 6.500v8h7.500v-1.500"/><rect x="3.500" y="3.500" width="8" height="9.500" fill="#f4f4f4"/><path d="M6.500 6.500V2.500a1.600 1.600 0 0 1 3.200 0v6.500" stroke="#4a78b4" stroke-width="1.100"/></svg>
<div class="row" style="left:114px;top:663.5px;letter-spacing:-.22px;letter-spacing:-0.24px;">County</div>
<svg style="left:57px;top:683px" width="9" height="9" viewBox="0 0 9 9"><rect x=".5" y=".5" width="8" height="8" fill="#fff" stroke="#919191"/><path d="M2 4.500h5M4.500 2v5" stroke="#000" stroke-width="1"/></svg>
<div class="a" style="left:67px;top:687px;width:6px;height:1px;background:repeating-linear-gradient(90deg,#a0a0a0 0,#a0a0a0 1px,transparent 1px,transparent 2px)"></div>
<div class="cb" style="left:74px;top:681px"><svg style="left:0;top:0" width="11" height="11" viewBox="0 0 11 11"><path d="M1.800 5.200L4.300 8.600L9.400 1.800" fill="none" stroke="#000" stroke-width="2"/></svg></div>
<svg style="left:93px;top:679px" width="15" height="16" viewBox="0 0 15 16" fill="none" stroke="#5a5a5a" stroke-width="1"><path d="M1.500 6.500v8h7.500v-1.500"/><rect x="3.500" y="3.500" width="8" height="9.500" fill="#f4f4f4"/><path d="M6.500 6.500V2.500a1.600 1.600 0 0 1 3.200 0v6.500" stroke="#4a78b4" stroke-width="1.100"/></svg>
<div class="row" style="left:114px;top:679.5px;letter-spacing:-.22px;letter-spacing:-0.517px;">Address_Ranges</div>
<svg style="left:57px;top:699px" width="9" height="9" viewBox="0 0 9 9"><rect x=".5" y=".5" width="8" height="8" fill="#fff" stroke="#919191"/><path d="M2 4.500h5M4.500 2v5" stroke="#000" stroke-width="1"/></svg>
<div class="a" style="left:67px;top:703px;width:6px;height:1px;background:repeating-linear-gradient(90deg,#a0a0a0 0,#a0a0a0 1px,transparent 1px,transparent 2px)"></div>
<div class="cb" style="left:74px;top:697px"><svg style="left:0;top:0" width="11" height="11" viewBox="0 0 11 11"><path d="M1.800 5.200L4.300 8.600L9.400 1.800" fill="none" stroke="#000" stroke-width="2"/></svg></div>
<svg style="left:93px;top:695px" width="15" height="16" viewBox="0 0 15 16" fill="none" stroke="#5a5a5a" stroke-width="1"><path d="M1.500 6.500v8h7.500v-1.500"/><rect x="3.500" y="3.500" width="8" height="9.500" fill="#f4f4f4"/><path d="M6.500 6.500V2.500a1.600 1.600 0 0 1 3.200 0v6.500" stroke="#4a78b4" stroke-width="1.100"/></svg>
<div class="row" style="left:114px;top:695.5px;letter-spacing:-.22px;letter-spacing:-0.498px;">Feature_Names</div>
<!-- status bar (rel coords: x-15,y-6) -->
<div class="t" style="left:7px;top:965px;font-size:11.300px;letter-spacing:-.12px;width:194px;overflow:hidden">1 feature(s) selected on layer faces_06023</div>
<div class="a" style="left:202px;top:960px;width:20px;height:20px;border:1px solid #8e8e8e;border-radius:3px;background:linear-gradient(180deg,#fdfdfd,#e2e2e2)"></div>
<svg style="left:204px;top:962px" width="16" height="16" viewBox="0 0 16 16"><path d="M5 2c2-1 4 0 5 2l1 4c.5 2-.5 4-2.500 4.500S5 12 4.500 10l-1-4C3 4 3.500 2.500 5 2z" fill="#fff" stroke="#111" stroke-width="1.500"/><path d="M4 6.500l6-1.500M7 2.500l.8 3.500" stroke="#111" stroke-width="1"/><path d="M1 1l13 13" stroke="#111" stroke-width="1.200"/><path d="M11 3l2-1.500M12 5.500l2.500-.5" stroke="#555" stroke-width=".8"/></svg>
<div class="t" style="left:230px;top:965px;font-size:11.300px;letter-spacing:-.2px">Coordinate:</div>
<div class="a" style="left:297px;top:961px;width:199px;height:18px;border:1px solid #a3a3a3;border-radius:2px;background:#fff;text-align:center;line-height:17px;font-size:11.300px;letter-spacing:-.3px;padding-left:2px">-123.370525,41.803397</div>
<div class="t" style="left:504px;top:965px;font-size:11.300px;letter-spacing:-.6px">Scale</div>
<div class="a" style="left:542px;top:961px;width:92px;height:19px;border:1px solid #9c9c9c;border-radius:3px;background:#fff;line-height:18px;font-size:11.300px;padding-left:5px">1:1,667</div>
<div class="a" style="left:613px;top:962px;width:1px;height:17px;background:#b8b8b8"></div>
<svg style="left:618px;top:967px" width="10" height="7" viewBox="0 0 10 7"><path d="M1 1l4 4 4-4" fill="none" stroke="#111" stroke-width="2"/></svg>
<div class="t" style="left:642px;top:965px;font-size:11.300px;letter-spacing:-.2px">Rotation:</div>
<div class="a" style="left:697px;top:955px;width:106px;height:31px;border:1px solid #9c9c9c;border-radius:3px;background:#fff;line-height:30px;font-size:11.300px;padding-left:5px">0.0</div>
<div class="a" style="left:786px;top:956px;width:1px;height:29px;background:#c4c4c4"></div>
<svg style="left:790px;top:961px" width="9" height="20" viewBox="0 0 9 20"><path d="M.5 5L4.500 .5 8.500 5zM.5 14.500L4.500 19 8.500 14.500z" fill="#111"/></svg>
<div class="cb" style="left:811px;top:964px"><svg style="left:0;top:0" width="11" height="11" viewBox="0 0 11 11"><path d="M1.800 5.200L4.300 8.600L9.400 1.800" fill="none" stroke="#000" stroke-width="2"/></svg></div>
<div class="t" style="left:828px;top:965px;font-size:11.300px;letter-spacing:-.2px">Render</div>
<svg style="left:880px;top:963px" width="16" height="16" viewBox="0 0 16 16" fill="none" stroke="#222" stroke-width="1.200"><circle cx="8" cy="8" r="6.800" fill="#8a8a8a"/><ellipse cx="8" cy="8" rx="3" ry="6.800"/><path d="M1.200 8h13.600M8 1.200v13.600"/><rect x="4.500" y="4.500" width="7" height="7" stroke="#111" fill="#cfcfcf" fill-opacity=".5"/></svg>
<div class="t" style="left:899px;top:965px;font-size:11.300px;letter-spacing:-.5px">EPSG:4269 (OTF)</div>
<svg style="left:1010px;top:964px" width="18" height="16" viewBox="0 0 18 16"><ellipse cx="9" cy="6.500" rx="8" ry="5.800" fill="#777"/><path d="M10 10l5 4.500-1-5.500z" fill="#777"/></svg>
<svg style="left:1056px;top:975px" width="13" height="13" viewBox="0 0 13 13" stroke="#bdbdbd" stroke-width="1"><path d="M12 1L1 12M12 5L5 12M12 9L9 12"/></svg>
<!-- map canvas: abs coords via viewBox -->
<div class="a" style="left:403px;top:139px;width:667px;height:812px;background:#fff;overflow:hidden;border:1px solid #a8a8a8;border-right-color:#e0e0e0">
<svg style="left:0;top:0" width="665" height="810" viewBox="419 146 665 810" font-family="Liberation Sans, sans-serif" font-size="10.400" fill="#000">
<defs>
<path id="r_state" d="M1090 468L993 515.200L892 558L857 577L799 604.200L744.400 635.300L719 659L703.300 672L672.600 702.700L640.600 739L607 782L586.600 817.800L564.800 861.600L544.400 908.200L519 960"/>
<path id="r_old" d="M1090 279.500L892 452L836 501.500L702.500 634C696 640 694.500 648 697.500 656C700 663 703 668.500 708.500 673.500"/>
<path id="r_se" d="M705 672L721 682L798.800 734.400C815 745 830 748 841.600 753.800C853 760 858 768 861 781C866 795 869 806 868.800 820C868 838 862 855 861 870.500C860 885 860 893 861 905.500C864 925 873 940 882 960"/>
<path id="r_mill" d="M564.800 861.600C575 862.500 585 864.500 594 866C605 868 615 870 623 873.200C632 877 639 882 643.500 887.800C650 895 653 903 653.700 911C654 918 654 923 652.200 928.600C648 938 638 946 627 960"/>
<path id="r_mill2" d="M564.800 861.600L544.400 861.600C539 862 535 863.500 531.200 866C521 875 514 886 506.500 896.600L452 958"/>
<path id="r_itroop2" d="M553.900 540L544.100 555.500L522.800 613.900C516 630 513 633 508 640L471.500 701.200L442.300 756.600L416 812"/>
<path id="r_itroop1" d="M697 140L697.700 161.400L647.200 357.700L542.200 558"/>
<path id="r_y2" d="M869.500 668.800C873 673 877 676 880.500 678C887 681 893 682 899.900 683C925 685 950 685 973.800 685.800C995 688 1014 691.500 1032 695.500L1090 708.500"/>
<path id="lp_old" d="M695.500 628C696 640 698 651 703 661C707 669 712 676 719 684"/>
</defs>
<!-- pale trust land -->
<path d="M419 146H848.600L852.500 451L653.700 641L641.200 648.200L605 727.500L543.800 711.400L522.500 758L607 782L586.600 817.800L564.800 861.600L544.400 908.200L521 954.300L519 960H419z" fill="#fafaee"/>
<!-- blue-grey area -->
<path d="M992 706.400L1090 732.500V960H948.500L951 900L954.300 847.200L962 800L974.500 751.900z" fill="#c9d9ec"/>
<path d="M1090 732.500L992 706.400L974.500 751.900L962 800L954.300 847.200L951 900L948.500 960" fill="none" stroke="#2f7440" stroke-width=".85" stroke-dasharray="4 1.200 1 1.200"/>
<!-- cyan selected -->
<path d="M852.500 451.300L891 452.500L836 501.500L702.500 634L693.700 645.500L653.700 641z" fill="#3ffaf5"/>
<!-- water line -->
<path d="M1014.600 146C1020 153 1026 158 1032 161.400C1043 166 1055 170 1067 173L1090 179" fill="none" stroke="#3d6fb6" stroke-width="1.400"/>
<!-- tiny roads top-left -->
<path d="M418 140L442 162" stroke="#a8aa80" stroke-width="5" fill="none"/><path d="M418 140L442 162" stroke="#f0efc2" stroke-width="3.200" fill="none"/><path d="M418 140L442 162" stroke="#c3dba2" stroke-width=".8" fill="none"/>
<path d="M487 140V160" stroke="#b4b080" stroke-width="5" fill="none"/><path d="M487 140V160" stroke="#f4efb4" stroke-width="3.200" fill="none"/>
<!-- yellow roads -->
<g fill="none" stroke-linejoin="round" stroke-linecap="round">
<use href="#r_itroop1" stroke="#b0ac7c" stroke-width="5"/><use href="#r_itroop1" stroke="#f5f0b8" stroke-width="3.300"/>
<use href="#r_y2" stroke="#b0ac7c" stroke-width="5.500"/><use href="#r_y2" stroke="#f5f0b8" stroke-width="3.800"/>
</g>
<!-- green-yellow roads -->
<g fill="none" stroke-linejoin="round">
<use href="#r_itroop2" stroke="#9a9e7a" stroke-width="4.900"/><use href="#r_se" stroke="#9a9e7a" stroke-width="4.900"/><use href="#r_mill" stroke="#9a9e7a" stroke-width="4.900"/><use href="#r_mill2" stroke="#9a9e7a" stroke-width="4.900"/><use href="#r_old" stroke="#9a9e7a" stroke-width="4.900"/><use href="#r_state" stroke="#9a9e7a" stroke-width="4.900"/>
<use href="#r_itroop2" stroke="#f2f2cc" stroke-width="3.200"/><use href="#r_se" stroke="#f2f2cc" stroke-width="3.200"/><use href="#r_mill" stroke="#f2f2cc" stroke-width="3.200"/><use href="#r_mill2" stroke="#f2f2cc" stroke-width="3.200"/><use href="#r_old" stroke="#f2f2cc" stroke-width="3.200"/><use href="#r_state" stroke="#f2f2cc" stroke-width="3.200"/>
<use href="#r_itroop2" stroke="#a4d4a0" stroke-width=".9" stroke-dasharray="3 1"/><use href="#r_se" stroke="#a4d4a0" stroke-width=".9" stroke-dasharray="3 1"/><use href="#r_mill" stroke="#a4d4a0" stroke-width=".9" stroke-dasharray="3 1"/><use href="#r_mill2" stroke="#a4d4a0" stroke-width=".9" stroke-dasharray="3 1"/><use href="#r_old" stroke="#a4d4a0" stroke-width=".9" stroke-dasharray="3 1"/><use href="#r_state" stroke="#a4d4a0" stroke-width=".9" stroke-dasharray="3 1"/>
</g>
<!-- dashed boundaries -->
<g fill="none" stroke="#2a6636" stroke-width=".85" stroke-dasharray="4 1.200 1 1.200">
<path d="M848.600 146L852.500 451.300L891 452.500"/>
<path d="M852.500 451.300L653.700 641L693.700 645.500"/>
<path d="M419 439L466.400 484L544 558L641.200 648.200"/>
<path d="M653.700 641L641.200 648.200L605 727.500L543.800 711.400L522.500 758L607 782"/>
<path d="M522.500 758L464.200 886.400L419 878"/>
</g>
<path d="M641.200 648.200L660 667" stroke="#555" stroke-width=".8" stroke-dasharray="5 3 1 3" fill="none"/>
<!-- node markers -->
<g fill="#c4cede" fill-opacity=".35" stroke="#9aa8c0" stroke-opacity=".6" stroke-width=".7"><circle cx="852.500" cy="451.300" r="3"/><circle cx="892" cy="452.500" r="3"/><circle cx="886" cy="457" r="3"/><circle cx="836" cy="501.500" r="3"/><circle cx="702.500" cy="634" r="3"/><circle cx="694" cy="645.500" r="3"/><circle cx="648.700" cy="639.500" r="3"/><circle cx="641.200" cy="648.200" r="3"/><circle cx="789" cy="546" r="2.500"/></g>
<!-- labels -->
<g letter-spacing="-.2">
<text transform="translate(638.500 377) rotate(-72)">Itroop Dr</text>
<text transform="translate(963.500 386) rotate(-41)">Old Hwy 96</text>
<text transform="translate(720 572.500) rotate(-43.500)">Old Hwy 96 Offset</text>
<text transform="translate(768.500 566.500) rotate(-44)">Old Hwy 96</text>
<text transform="translate(856.500 571.500) rotate(-24)">State Hwy 96</text>
<text transform="translate(477 695) rotate(-62)">Itroop Dr</text>
<text dy="3.600"><textPath href="#lp_old" startOffset="1">Old Hwy 96</textPath></text>
<text transform="translate(637.500 742) rotate(-47.500)">State Hwy 96</text>
<text transform="translate(569.500 850) rotate(-63)">State Hwy 96</text>
<text transform="translate(531.500 932.500) rotate(-66)">State Hwy 96</text>
<text transform="translate(632.500 880) rotate(50)">Mill Rd</text>
</g>
</svg>
</div>
<!-- Modify Area Feature dialog (rel coords x-15,y-6) -->
<div class="a" style="left:217px;top:148px;width:300px;height:330px;background:#f0f0f0;box-shadow:0 1px 6px rgba(0,0,0,.32),0 0 2px rgba(0,0,0,.25)">
<div class="a" style="left:0;top:0;width:300px;height:30px;background:#fff"></div>
<div class="t" style="left:8px;top:9px;font-size:12.400px;color:#9c9c9c;letter-spacing:-.32px">Modify Area Feature</div>
<div class="a" style="left:280px;top:7px;width:19px;height:19px;background:#e6e6e6"></div>
<svg style="left:286px;top:13px" width="7" height="7" viewBox="0 0 7 7"><path d="M.5 .5l6 6M6.500 .5l-6 6" stroke="#fafafa" stroke-width="1.100"/></svg>
<div class="t" style="left:10px;top:48px;font-size:11.300px;letter-spacing:-.1px">Geography</div>
<div class="a" style="left:72px;top:42px;width:217px;height:22px;border:1px solid #8f8f8f;border-radius:4px;background:linear-gradient(180deg,#fff 0,#f4f4f4 60%,#e4e4e4 100%)"></div>
<div class="t" style="left:76px;top:48px;font-size:11.300px;letter-spacing:-.18px">Reservation / Trust Land</div>
<div class="a" style="left:267px;top:45px;width:1px;height:16px;background:#cfcfcf"></div>
<svg style="left:274px;top:47px" width="8" height="13" viewBox="0 0 8 13"><path d="M0 5L4 .5 8 5zM0 8l4 4.500L8 8z" fill="#000"/></svg>
<!-- buttons -->
<div class="a" style="left:6px;top:78px;width:31px;height:27px;background:#c9c9c9;border:1px solid #8c8c8c;border-radius:3px"></div>
<div class="a" style="left:38px;top:78px;width:11px;height:27px;background:#c9c9c9;border:1px solid #9c9c9c;border-radius:3px"></div>
<svg style="left:9px;top:80px" width="26" height="24" viewBox="0 0 26 24"><rect x="1" y="1" width="22" height="19" fill="#c4c4c4" stroke="#111" stroke-width="1.200" stroke-dasharray="2.500 1.500"/><rect x="2" y="2" width="15" height="14" fill="#1878c0"/><use href="#cur" x="11.500" y="8" width="12" height="15.500"/></svg>
<svg style="left:40px;top:89px" width="8" height="5" viewBox="0 0 8 5"><path d="M0 0h8L4 5z" fill="#000"/></svg>
<div class="a db" style="left:55px"></div><div class="a db" style="left:90px"></div><div class="a db" style="left:125px"></div><div class="a db" style="left:160px"></div><div class="a db" style="left:195px"></div><div class="a db" style="left:230px"></div><div class="a db" style="left:265px;border-color:#bdbdbd"></div>
<svg style="left:59px;top:81px" width="21" height="21" viewBox="0 0 21 21"><path d="M8.500 2.500h4v6h6v4h-6v6h-4v-6h-6v-4h6z" fill="#2ba52b" stroke="#1d8a1d" stroke-width="3.600" stroke-linejoin="round"/><path d="M8.500 2.500h4v6h6v4h-6v6h-4v-6h-6v-4h6z" fill="#2ba52b" stroke="#fff" stroke-width="1.700" stroke-linejoin="round"/></svg>
<svg style="left:93px;top:85px" width="23" height="13" viewBox="0 0 23 13"><rect x="1" y="1" width="21" height="11" rx="3" fill="#fff" stroke="#b01414" stroke-width="1.300"/><rect x="4" y="4" width="15" height="5" fill="#b41414"/></svg>
<svg style="left:128px;top:84px" width="23" height="15" viewBox="0 0 23 15"><path d="M11.500 1.500L21.500 11c1 1.500 0 2.500-1.500 2.500H3c-1.500 0-2.500-1-1.500-2.500z" fill="#2f8ff0" stroke="#1a52b4" stroke-width="1.200" stroke-linejoin="round"/></svg>
<svg style="left:163px;top:84px" width="23" height="15" viewBox="0 0 23 15"><path d="M11.500 13.500L21.500 4c1-1.500 0-2.500-1.500-2.500H3C1.500 1.500.5 2.500 1.500 4z" fill="#2f8ff0" stroke="#1a52b4" stroke-width="1.200" stroke-linejoin="round"/></svg>
<svg style="left:198px;top:80px" width="24" height="24" viewBox="0 0 24 24"><path d="M1 1.500h17.500l4 20.500H5z" fill="#1e5f92"/><path d="M3 8c5 2 12-1 17 1M8 1.500c0 6 4 12 2 20M13 1.500c2 5 0 10 3 14M4 15c4-1 8 0 13-2" fill="none" stroke="#d6ea2a" stroke-width="1"/><rect x="14.500" y="14.500" width="8" height="8" fill="#5a9a5a" stroke="#d8ead8" stroke-width=".8"/><path d="M18.500 16v5M16 18.500h5" stroke="#fff" stroke-width="1.200"/></svg>
<svg style="left:233px;top:80px" width="24" height="24" viewBox="0 0 24 24"><rect x="1.500" y="2" width="20" height="20" fill="#f8f8f8" stroke="#333" stroke-width="1.100"/><path d="M1.500 5.500h20M1.500 9h20M1.500 12.500h20M1.500 16h20M1.500 19h20M6.500 2v20M11.500 2v20M16.500 2v20" stroke="#444" stroke-width=".9"/><path d="M9 21l1.300-4.200L18.500 6l2.700 2-8 11z" fill="#e6cc58" stroke="#a8922e" stroke-width=".7"/></svg>
<svg style="left:270px;top:82px" width="19" height="19" viewBox="0 0 19 19"><rect width="19" height="19" rx="2" fill="#b5b5b5"/><path d="M3.500 3.500l12 12M15.500 3.500l-12 12" stroke="#f4f4f4" stroke-width="3"/></svg>
<!-- table -->
<div class="a" style="left:6px;top:112px;width:289px;height:212px;background:#fff;border:1px solid #a9a9a9"></div>
<div class="a" style="left:7px;top:113px;width:287px;height:22px;background:linear-gradient(180deg,#f7f7f7,#ececec)"></div>
<div class="a" style="left:201px;top:116px;width:1px;height:17px;background:#d0d0d0"></div>
<div class="t b" style="left:7px;top:119.500px;width:194px;text-align:center;font-size:11.500px;letter-spacing:.2px">Info</div>
<div class="a" style="left:8px;top:135px;width:195px;height:21px;background:#3399ff"></div>
<div class="t" style="left:11.500px;top:141px;font-size:11.200px;letter-spacing:-.2px;color:#fff">1750-Karuk Off-Reservation Trust Land</div>
<div class="a" style="left:8px;top:156px;width:195px;height:21px;background:#f5f5f5"></div>
<div class="t" style="left:11.500px;top:162px;font-size:11.200px;letter-spacing:-.2px">1750-Karuk Reservation</div>
</div>
</div><!-- /#qgis -->
<!-- win10 taskbar -->
<div class="a" id="tb" style="left:0;top:1040px;width:1920px;height:40px;background:#06080d"></div>
<svg style="left:16px;top:1052px" width="17" height="17" viewBox="0 0 17 17" fill="#fff"><path d="M0 2.400L6.900 1.450V8H0zM7.700 1.340L17 0V8H7.700zM0 8.800H6.900V15.400L0 14.450zM7.700 8.800H17V16.800L7.700 15.500z"/></svg>
<div class="a" style="left:48px;top:1040px;width:344px;height:40px;background:#383838"></div>
<svg style="left:57px;top:1050px" width="22" height="22" viewBox="0 0 22 22"><circle cx="10.500" cy="10.500" r="8.600" fill="none" stroke="#fff" stroke-width="2.600"/></svg>
<div class="t" style="left:84px;top:1052px;font-size:15px;letter-spacing:-.15px;color:#b4b4b4;font-family:'Liberation Sans',sans-serif">Ask me anything</div>
<svg style="left:364px;top:1050px" width="14" height="22" viewBox="0 0 14 22" fill="none" stroke="#a8a8a8" stroke-width="1.300"><rect x="4.500" y="1.500" width="5" height="11" rx="2.500"/><path d="M2 9v2a5 5 0 0 0 10 0V9M7 16v3M4 19.500h6"/></svg>
<svg style="left:405px;top:1051px" width="22" height="18" viewBox="0 0 22 18" fill="none" stroke="#fff" stroke-width="1.400"><rect x="5" y="2.500" width="12" height="13"/><path d="M3 4.500H1V13.500H3M19 4.500h2v9h-2"/></svg>
<!-- control panel icon -->
<svg style="left:455px;top:1051px" width="24" height="18" viewBox="0 0 24 18"><rect x="1" y="1" width="21" height="15" fill="#3e9be0" stroke="#7fc4f4" stroke-width="1"/><circle cx="7.500" cy="7" r="3.500" fill="#d9ecfa"/><path d="M7.500 7V3.500A3.500 3.500 0 0 1 11 7z" fill="#f0a030"/><rect x="14" y="4" width="5" height="1.600" fill="#e8f4fd"/><rect x="14" y="7" width="5" height="1.600" fill="#e8f4fd"/><rect x="14" y="10" width="5" height="1.600" fill="#e8f4fd"/><rect x="4" y="12.500" width="9" height="1.400" fill="#f0c060"/></svg>
<!-- edge -->
<svg style="left:504px;top:1048px" width="24" height="24" viewBox="0 0 24 24"><path d="M1.500 11.500C2.500 5 7 1 12.500 1C19 1 22.500 6 22.500 11.500V14H8.500C8.800 17.500 11.500 19.300 15 19.300C17.500 19.300 19.700 18.500 21.500 17.400V21.700C19.500 22.800 17 23.500 14 23.500C7.500 23.500 3.500 19.500 3.500 13.500C3.500 10 5.500 7 8.500 5.500C6 6.500 3.500 8.500 1.500 11.500zM8.600 10H16.300C16.300 7.300 14.800 5.500 12.500 5.500C10.300 5.500 8.900 7.300 8.600 10z" fill="#1183e0"/></svg>
<div class="a" style="left:496px;top:1078px;width:40px;height:2px;background:#76b9ed"></div>
<!-- explorer -->
<svg style="left:553px;top:1050px" width="24" height="20" viewBox="0 0 24 20"><path d="M1 2.500h8l1.500 2H23v13H1z" fill="#f6d264"/><rect x="1" y="5.500" width="22" height="12" fill="#fbe28a"/><path d="M6 18v-5.500h12V18h-3.200v-3H9.200v3z" fill="#2e8fdc"/><rect x="2" y="1.500" width="6" height="1.500" fill="#e8b93c"/></svg>
<!-- media player -->
<svg style="left:602px;top:1050px" width="24" height="22" viewBox="0 0 24 22"><rect x="2" y="1.500" width="19" height="18" fill="#4a8cc0" stroke="#9cc4e4"/><rect x="17" y="1.500" width="4" height="18" fill="#bcd8ee"/><circle cx="10.500" cy="10.500" r="6.500" fill="#f08a1e" stroke="#fbd7a4" stroke-width="0.800"/><path d="M8.500 6.800L14.500 10.500L8.500 14.200z" fill="#fff"/></svg>
<!-- access -->
<svg style="left:650px;top:1047px" width="26" height="24" viewBox="0 0 26 24"><path d="M7 1.500h16v20H3V6z" fill="#b0356c"/><path d="M7 1.500h16v8C14 9 8 12 3 17V6z" fill="#d773a0"/><circle cx="18" cy="8" r="3.800" fill="#fbe9f1"/><path d="M16 10.500L7 19.500l-.5 2.500h3l1-1.500h1.800l.5-1.800h1.700L18 13z" fill="#fbe9f1"/><circle cx="19" cy="7" r="1.200" fill="#b0356c"/></svg>
<!-- excel -->
<svg style="left:699px;top:1047px" width="26" height="24" viewBox="0 0 26 24"><path d="M4 1.500h16l3.500 3.500v17H2z" fill="#4c9a3c"/><path d="M4 1.500h16l3.500 3.500v6C14 10 8 12 2.500 17z" fill="#9bd08a"/><rect x="6" y="12" width="16" height="9" fill="#e6f4e0"/><path d="M6 15h16M6 18h16M11 12v9M16.500 12v9" stroke="#4c9a3c" stroke-width="1"/><path d="M7 4l5.500 7M12.500 4L7 11" stroke="#1d6b1a" stroke-width="2.400"/></svg>
<!-- store -->
<svg style="left:749px;top:1047px" width="24" height="26" viewBox="0 0 24 26"><path d="M7.500 7V5a4 4 0 0 1 8 0v2" fill="none" stroke="#fff" stroke-width="1.300"/><path d="M1.500 7.500L22.500 6V25L1.500 23z" fill="#fff"/><path d="M7 11.300l4-.4v4H7zM12 10.800l4.800-.5v4.600H12zM7 15.800h4v4l-4-.4zM12 15.800h4.800v4.700L12 20z" fill="#05090f"/></svg>
<!-- word -->
<svg style="left:796px;top:1047px" width="28" height="24" viewBox="0 0 28 24"><path d="M6 1.500h16l3.500 3.500v17H3z" fill="#2b5fb4"/><path d="M6 1.500h16l3.500 3.500v6C16 10 9 12 3.500 17z" fill="#8eb4e8"/><rect x="8" y="5" width="15" height="14" fill="#f4f8fe"/><path d="M10 14h11M10 16.500h11M17 8h4M17 10.500h4" stroke="#6d92d0" stroke-width="1"/><path d="M9.500 6.500l1.600 6 1.700-6 1.700 6 1.600-6" fill="none" stroke="#1c3f8c" stroke-width="1.500"/></svg>
<div class="a" style="left:790px;top:1078px;width:40px;height:2px;background:#76b9ed"></div>
<!-- outlook -->
<svg style="left:845px;top:1047px" width="28" height="26" viewBox="0 0 28 26"><path d="M6 1.500h16l3 3v17H3z" fill="#f4a928"/><path d="M6 1.500h16l3 3v7C16 10 9 12 3.500 17z" fill="#fbd27a"/><path d="M6 7h17v11H6z" fill="#fdf3d8"/><path d="M6 7l8.500 6L23 7" fill="none" stroke="#e09a20" stroke-width="1"/><circle cx="13" cy="17" r="6" fill="#f8b830" stroke="#fde6a6" stroke-width="1"/><path d="M13 13.500V17l3-1.800" fill="none" stroke="#fff" stroke-width="1.400"/></svg>
<div class="a" style="left:839px;top:1078px;width:40px;height:2px;background:#76b9ed"></div>
<!-- powerpoint -->
<svg style="left:894px;top:1047px" width="28" height="24" viewBox="0 0 28 24"><path d="M6 1.500h16l3.500 3.500v17H3z" fill="#e0552a"/><path d="M6 1.500h16l3.500 3.500v6C16 10 9 12 3.500 17z" fill="#f6a684"/><rect x="8" y="8" width="16" height="11" fill="#fdeee6"/><rect x="10" y="10.500" width="6" height="6" fill="#e0552a"/><circle cx="19.500" cy="13.500" r="3" fill="#e0552a"/><path d="M19.500 13.500V10.500A3 3 0 0 1 22.500 13.500z" fill="#fff"/></svg>
<!-- chrome -->
<svg style="left:945px;top:1048px" width="24" height="24" viewBox="0 0 24 24"><circle cx="12" cy="12" r="11" fill="#e33b2e"/><path d="M12 12L2.470 6.500A11 11 0 0 0 7.500 22.040z" fill="#269c48"/><path d="M12 12L7.500 22.040A11 11 0 0 0 22.500 8.500H12z" fill="#fbc116"/><path d="M12 12L16.500 22.040A11 11 0 0 1 7.500 22.040z" fill="#269c48" opacity="0"/><circle cx="12" cy="12" r="5.200" fill="#f4f4f4"/><circle cx="12" cy="12" r="4" fill="#4687f0"/></svg>
<!-- qgis -->
<div class="a" style="left:982px;top:1040px;width:48px;height:40px;background:#33363c"></div>
<div class="a" style="left:982px;top:1078px;width:48px;height:2px;background:#76b9ed"></div>
<div class="t" style="left:996px;top:1048px;font-size:25px;font-weight:bold;font-family:'Liberation Serif',serif;color:#dde25a">Q</div>
<svg style="left:996px;top:1046px" width="24" height="26" viewBox="0 0 24 26"><path d="M3 24L19 4M19 4l-5.500 1.500M19 4l-1 5.500" stroke="#2e9a2e" stroke-width="2.200" fill="none"/></svg>
<!-- citrix receiver -->
<svg style="left:1043px;top:1048px" width="24" height="24" viewBox="0 0 24 24"><circle cx="12" cy="12" r="11.500" fill="#3a3a3a"/><circle cx="12" cy="12" r="10.500" fill="#5b5b5b"/><path d="M12 4.500A7.500 7.500 0 1 0 19.500 12" fill="none" stroke="#fff" stroke-width="2"/><path d="M12 8A4 4 0 1 0 16 12" fill="none" stroke="#fff" stroke-width="1.800"/><circle cx="12" cy="12" r="1.300" fill="#fff"/></svg>
<div class="a" style="left:1035px;top:1078px;width:40px;height:2px;background:#76b9ed"></div>
<!-- tray -->
<svg style="left:1593px;top:1051px" width="16" height="18" viewBox="0 0 16 18" fill="none" stroke="#fff" stroke-width="1.100"><rect x="1.500" y="5.500" width="6.500" height="10.500" rx=".8"/><rect x="2.800" y="1.500" width="4" height="4"/><path d="M4 3.200h.6M5.500 3.200h.6" stroke-width=".9"/><path d="M8.500 14.500l1.800 1.800 3.200-3.800" stroke="#9a9a9a"/></svg>
<svg style="left:1614px;top:1054px" width="18" height="12" viewBox="0 0 22 14"><path d="M5 13.500h13a3.300 3.300 0 0 0 .5-6.500 4.500 4.500 0 0 0-8.500-1.500A3.600 3.600 0 0 0 5.500 8 2.800 2.800 0 0 0 5 13.500z" fill="#8d9198"/><path d="M4 9a3.500 3.500 0 0 1 5-3.500" fill="none" stroke="#a8acb2" stroke-width="1"/></svg>
<svg style="left:1640px;top:1052px" width="15" height="15" viewBox="0 0 16 16"><circle cx="8" cy="8" r="7.500" fill="#7c7c7c"/><circle cx="8" cy="8" r="7" fill="none" stroke="#d8d8d8" stroke-width=".8"/><path d="M8 3.500A4.500 4.500 0 1 0 12.500 8" fill="none" stroke="#fff" stroke-width="1.300"/><circle cx="8" cy="8" r="1.700" fill="#fff"/></svg>
<svg style="left:1662px;top:1053px" width="18" height="15" viewBox="0 0 18 15" fill="none" stroke="#fff" stroke-width="1.100"><rect x="4.500" y="1.500" width="12" height="8.500"/><path d="M7 13.500h7M10.500 10v3.500"/><rect x="1" y="2.500" width="3" height="3" fill="#05090f"/><path d="M2.500 5.500V13h4"/></svg>
<svg style="left:1686px;top:1051px" width="18" height="18" viewBox="0 0 18 18"><circle cx="8" cy="10" r="6.500" fill="#f0c41c"/><circle cx="8" cy="10" r="3.800" fill="#f4f4f4"/><path d="M8 10l1.500-3M8 10l-2 1" stroke="#333" stroke-width=".9"/><path d="M9 9L14 1.500" stroke="#d4a81c" stroke-width="1.300"/><circle cx="12.500" cy="13" r="3.800" fill="#1fa33a"/><path d="M10.600 13l1.400 1.500 2.400-2.800" stroke="#fff" stroke-width="1.100" fill="none"/></svg>
<svg style="left:1712px;top:1054px" width="14" height="13" viewBox="0 0 14 13"><rect x=".5" y=".5" width="12" height="12" fill="#c8150c"/><path d="M2 10.500C4.500 9 6 5.500 6 3.500 6 2 4.800 2.500 5.200 4.500c.5 2.500 3 5 6 4.500-2.200-.8-6 0-9.200 1.500z" fill="none" stroke="#fff" stroke-width=".8"/><circle cx="11" cy="2.500" r="2" fill="#f0a020"/><circle cx="11" cy="2.500" r=".9" fill="#fff"/></svg>
<svg style="left:1735px;top:1054px" width="15" height="11" viewBox="0 0 15 11"><rect x=".5" y=".5" width="13.500" height="10" fill="#f4d068" stroke="#fbe9a8" stroke-width=".8"/><path d="M.5 .5L7.200 6 14 .5M.5 10.500L5.500 5M14 10.500L9 5" fill="none" stroke="#d09a20" stroke-width=".8"/></svg>
<svg style="left:1758px;top:1051px" width="17" height="18" viewBox="0 0 17 18"><rect x="1" y="1.500" width="13" height="13" rx="2" fill="#f5cf9a" stroke="#e8a860" stroke-width=".8"/><rect x="2.500" y="3" width="10" height="10" rx="1" fill="#fbe4c4"/><circle cx="10" cy="11" r="5.500" fill="#f0c060" stroke="#f8e0a8" stroke-width=".8"/><path d="M7.500 10l2.500 2.500 2.500-2.500" stroke="#b07818" stroke-width="1.200" fill="none"/></svg>
<svg style="left:1782px;top:1052px" width="18" height="16" viewBox="0 0 20 18" fill="none" stroke="#fff" stroke-width="1.200"><path d="M1.500 6.500h3l4-4v13l-4-4h-3z"/><path d="M11 6.500a3.500 3.500 0 0 1 0 5" stroke="#fff"/><path d="M13.500 4.500a6.500 6.500 0 0 1 0 9" stroke="#9a9a9a"/><path d="M16 2.500a9.500 9.500 0 0 1 0 13" stroke="#6a6a6a"/></svg>
<div class="t" style="left:1800px;top:1045px;width:70px;text-align:center;font-size:12px;color:#fff">3:49 PM</div>
<div class="t" style="left:1800px;top:1062px;width:70px;text-align:center;font-size:12px;color:#fff">11/15/2016</div>
<svg style="left:1878px;top:1052px" width="18" height="17" viewBox="0 0 18 17" fill="none" stroke="#fff" stroke-width="1.100"><path d="M1.500 1.500h15v10.500h-6l-2.200 2.800-2.300-2.800h-4.500z"/></svg>
<div class="a" style="left:1914px;top:1040px;width:1px;height:40px;background:#3a3e44"></div>
</body></html>
